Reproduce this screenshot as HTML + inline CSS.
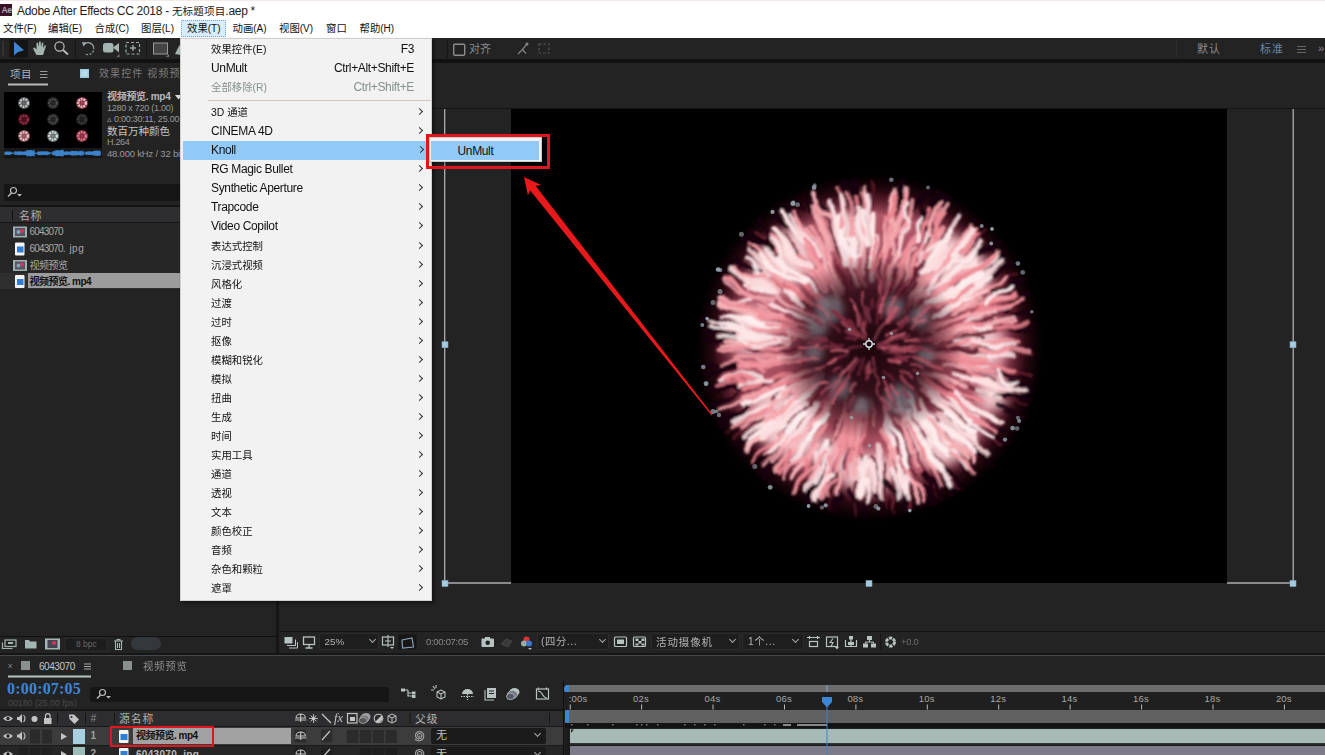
<!DOCTYPE html><html><head><meta charset="utf-8"><title>AE</title><style>
*{box-sizing:border-box;margin:0;padding:0}
html,body{width:1325px;height:755px;overflow:hidden}
body{background:#232323;font-family:"Liberation Sans","Noto Sans CJK SC",sans-serif;font-size:11px;position:relative;color:#9a9a9a}
.a{position:absolute}
.t{position:absolute;white-space:nowrap;line-height:1}
svg{position:absolute;overflow:visible}
.mi{position:absolute;left:0;width:250px;height:19px;color:#111;font-size:12px;letter-spacing:-.35px}
.mi span{position:absolute;top:2.5px;white-space:nowrap;line-height:13px}
.mi .l{left:30px}
.mi.k .l{font-size:10.4px;letter-spacing:0;top:3px}
.mi.h .l{left:28px}
.mi.h i{right:7px}
.mi .r{right:17px}
.mi i{position:absolute;right:9px;top:6px;width:5px;height:5px;border-top:1px solid #333;border-right:1px solid #333;transform:rotate(45deg) }
.mb{position:absolute;top:24px;font-size:10.4px;color:#111;white-space:nowrap;line-height:1}
.dd{position:absolute;height:17px;top:633px;background:#1e1e1e;border:1px solid #2c2c2c;border-radius:2px}
.cv{position:absolute;width:5px;height:5px;border-bottom:1.3px solid #aaa;border-right:1.3px solid #aaa;transform:rotate(45deg)}
.sw{position:absolute;width:9px;height:12px;background:#2a2a2a}
</style></head><body><div class="a" style="left:0;top:0;width:1325px;height:38px;background:#fff"></div>
<div class="a" style="left:0;top:0;width:1325px;height:1px;background:#f3e9e7"></div>
<div class="a" style="left:0;top:3.5px;width:12px;height:12px;background:#3a1226"></div>
<div class="t" style="left:1.6px;top:5.5px;font-size:8.5px;color:#b4a4b4;font-weight:bold;letter-spacing:-0.5px">Ae</div>
<div class="t" style="left:17px;top:4.5px;font-size:12px;letter-spacing:-.3px;color:#222">Adobe After Effects CC 2018 - <span style="font-size:10.6px;letter-spacing:.1px">无标题项目</span>.aep *</div>
<div class="a" style="left:180.7px;top:20px;width:45.3px;height:17px;background:#d9ecfb;border:1px dotted #6aa7dc"></div>
<div class="mb" style="left:3px">文件<span style="font-size:10px">(F)</span></div>
<div class="mb" style="left:48px">编辑<span style="font-size:10px">(E)</span></div>
<div class="mb" style="left:94.5px">合成<span style="font-size:10px">(C)</span></div>
<div class="mb" style="left:141px">图层<span style="font-size:10px">(L)</span></div>
<div class="mb" style="left:187px">效果<span style="font-size:10px">(T)</span></div>
<div class="mb" style="left:232.5px">动画<span style="font-size:10px">(A)</span></div>
<div class="mb" style="left:279px">视图<span style="font-size:10px">(V)</span></div>
<div class="mb" style="left:326px">窗口</div>
<div class="mb" style="left:359.5px">帮助<span style="font-size:10px">(H)</span></div>
<div class="a" style="left:0;top:38px;width:1325px;height:21px;background:#232323"></div>
<div class="a" style="left:0;top:58.8px;width:1325px;height:3.8px;background:#121212"></div>
<svg style="left:0;top:0" width="1325" height="62"><rect x="9.5" y="40" width="18.5" height="17.5" fill="#141414"/><rect x="2" y="41" width="2" height="15" fill="#333"/><polygon points="14,41.5 14,55.5 17.6,52.2 24,50.3" fill="#3d85d0"/><path d="M36.5,55 L34,50.5 L33,48 L34.5,47.5 L36.5,49.5 L36.5,43 L38,42.5 L38.6,47 L39.2,41.5 L40.7,41.5 L41,47 L42,42.5 L43.4,42.8 L43,48 L45,45 L46,45.8 L44,52 L43,55 Z" fill="#a3b5b1"/><circle cx="59.5" cy="46.5" r="4.6" fill="none" stroke="#bdbdbd" stroke-width="1.2"/><line x1="63" y1="50" x2="68" y2="54.5" stroke="#bdbdbd" stroke-width="1.8"/><rect x="75" y="40" width="1" height="18" fill="#161616"/><path d="M84,44 A6,6 0 1 1 84.5,53.5" fill="none" stroke="#9aa" stroke-width="1.2" stroke-dasharray="14 1.5 2 1.5 2 1.5 2 1.5 2 20"/><polygon points="82,42 87,42.5 83.5,46.5" fill="#9aa"/><rect x="103" y="43" width="10.5" height="9.5" rx="2.5" fill="#a3b5b1"/><polygon points="113,47.5 119,43 119,52.5" fill="#a3b5b1"/><polygon points="119.5,54 119.5,57 116.5,57" fill="#777"/><rect x="126" y="42.5" width="13.5" height="11.5" fill="none" stroke="#9aa" stroke-width="1.2" stroke-dasharray="3 2"/><path d="M130,48h6M133,45v6" stroke="#9aa" stroke-width="1.4"/><rect x="146" y="40" width="1" height="18" fill="#161616"/><rect x="153.5" y="43" width="14" height="11" fill="#444" stroke="#999" stroke-width="1"/><polygon points="169,54 169,57 166,57" fill="#777"/><polygon points="175,54 179,46 181,44 181,55" fill="#a3b5b1"/><rect x="447" y="40" width="1" height="18" fill="#161616"/><rect x="453.7" y="44.2" width="11" height="11" rx="1" fill="none" stroke="#8c8c8c" stroke-width="1.4"/><path d="M518,54 L522.5,49.5 L526,53.5 M522.5,49.5 L527,44" fill="none" stroke="#808080" stroke-width="1.2"/><circle cx="527" cy="44" r="1.5" fill="#888"/><rect x="539" y="44" width="10" height="9" fill="none" stroke="#555" stroke-width="1.2" stroke-dasharray="2.5 2"/><path d="M1297,46.5h9M1297,49.5h9M1297,52.5h9" stroke="#666" stroke-width="1"/><rect x="1176" y="39" width="1" height="19" fill="#2b2b2b"/></svg>
<div class="t" style="left:469px;top:44px;font-size:11px;color:#8a8a8a">对齐</div>
<div class="t" style="left:1197px;top:44px;font-size:11px;color:#8c8c8c;letter-spacing:1px">默认</div>
<div class="t" style="left:1260px;top:44px;font-size:11px;color:#6585a8;letter-spacing:1px">标准</div>
<div class="t" style="left:1318px;top:43px;font-size:11px;color:#888">»</div>
<div class="a" style="left:276.3px;top:62px;width:2.6px;height:593px;background:#151515"></div>
<div class="t" style="left:10px;top:69px;font-size:10.5px;color:#b4b4b4;letter-spacing:.6px">项目</div>
<svg style="left:0;top:0" width="280" height="100"><path d="M40,71.5h7.5M40,74.5h7.5M40,77.5h7.5" stroke="#9a9a9a" stroke-width="1"/><rect x="8" y="83.5" width="40" height="2" fill="#b9b9b9"/><rect x="80" y="69" width="9" height="9" fill="#9ecbe0"/><rect x="81.5" y="70.5" width="6" height="6" fill="#b9dcea"/></svg>
<div class="t" style="left:99px;top:69px;font-size:10px;color:#7d7d7d;letter-spacing:1.1px">效果控件 视频预览.mp4</div>
<svg style="left:0;top:0" width="280" height="170"><rect x="4" y="92" width="98" height="65.5" fill="#000"/><circle cx="24" cy="103.0" r="6" fill="#6a6e70" opacity=".8"/><circle cx="24" cy="103.0" r="3.8" fill="none" stroke="#c4c8c8" stroke-width="2.4" stroke-dasharray="1.8 .9"/><circle cx="24" cy="103.0" r="1.2" fill="#6a6e70"/><circle cx="53" cy="103.0" r="6" fill="#2a2a2c" opacity=".8"/><circle cx="53" cy="103.0" r="3.8" fill="none" stroke="#4c4c4e" stroke-width="2.4" stroke-dasharray="1.8 .9"/><circle cx="53" cy="103.0" r="1.2" fill="#2a2a2c"/><circle cx="82" cy="103.0" r="6" fill="#a8485c" opacity=".8"/><circle cx="82" cy="103.0" r="3.8" fill="none" stroke="#f4c4c8" stroke-width="2.4" stroke-dasharray="1.8 .9"/><circle cx="82" cy="103.0" r="1.2" fill="#a8485c"/><circle cx="24" cy="119.5" r="6" fill="#54121f" opacity=".8"/><circle cx="24" cy="119.5" r="3.8" fill="none" stroke="#8e2e4c" stroke-width="2.4" stroke-dasharray="1.8 .9"/><circle cx="24" cy="119.5" r="1.2" fill="#54121f"/><circle cx="53" cy="119.5" r="6" fill="#28282a" opacity=".8"/><circle cx="53" cy="119.5" r="3.8" fill="none" stroke="#48484a" stroke-width="2.4" stroke-dasharray="1.8 .9"/><circle cx="53" cy="119.5" r="1.2" fill="#28282a"/><circle cx="82" cy="119.5" r="6" fill="#222224" opacity=".8"/><circle cx="82" cy="119.5" r="3.8" fill="none" stroke="#3c3c3e" stroke-width="2.4" stroke-dasharray="1.8 .9"/><circle cx="82" cy="119.5" r="1.2" fill="#222224"/><circle cx="24" cy="136.0" r="6" fill="#a4666e" opacity=".8"/><circle cx="24" cy="136.0" r="3.8" fill="none" stroke="#ecc6ca" stroke-width="2.4" stroke-dasharray="1.8 .9"/><circle cx="24" cy="136.0" r="1.2" fill="#a4666e"/><circle cx="53" cy="136.0" r="6" fill="#80888a" opacity=".8"/><circle cx="53" cy="136.0" r="3.8" fill="none" stroke="#d0dcd8" stroke-width="2.4" stroke-dasharray="1.8 .9"/><circle cx="53" cy="136.0" r="1.2" fill="#80888a"/><circle cx="82" cy="136.0" r="6" fill="#a23850" opacity=".8"/><circle cx="82" cy="136.0" r="3.8" fill="none" stroke="#e07e8c" stroke-width="2.4" stroke-dasharray="1.8 .9"/><circle cx="82" cy="136.0" r="1.2" fill="#a23850"/><rect x="4" y="148" width="98" height="9.5" fill="#171717"/><path d="M5,151.7v3.1M6,151.5v3.5M7,151.6v3.2M8,151.4v3.5M9,151.4v3.6M10,151.8v2.9M11,151.8v2.8M15,151.3v3.8M16,151.6v3.1M17,151.7v3.1M18,151.2v4.0M19,151.5v3.4M20,151.3v3.8M21,151.5v3.4M22,151.4v3.6M23,151.7v3.0M24,151.4v3.6M25,151.3v3.8M26,151.5v3.4M27,150.0v6.5M28,150.0v6.3M29,150.7v5.0M30,150.0v6.5M31,150.1v6.1M32,150.4v5.5M33,150.7v5.0M34,149.8v6.7M38,151.5v3.4M39,151.4v3.7M40,151.3v3.9M41,151.4v3.7M42,151.2v3.9M43,151.6v3.3M44,151.3v3.8M45,151.5v3.3M46,151.2v3.9M47,151.3v3.9M48,151.7v2.9M49,151.7v3.0M53,151.5v3.4M54,151.0v4.5M55,151.3v3.7M56,150.1v6.2M57,150.4v5.5M58,150.2v6.0M59,150.3v5.7M60,150.4v5.6M61,150.1v6.1M62,150.1v6.1M63,149.8v6.8M64,151.5v3.4M65,151.4v3.7M66,151.4v3.6M67,151.3v3.7M68,151.5v3.4M69,151.8v2.8M70,151.4v3.6M71,151.3v3.7M72,150.8v4.9M73,151.0v4.4M74,150.9v4.6M75,151.3v3.8M76,150.8v4.7M77,151.0v4.4M78,151.2v3.9M79,151.4v3.6M80,150.8v4.8M81,150.7v5.0M82,151.4v3.6M83,150.8v4.7M86,151.6v3.3M87,151.7v3.0M88,151.6v3.2M89,151.3v3.7M90,151.3v3.8M91,151.8v2.9M92,151.4v3.5M93,151.2v3.9M94,150.7v5.0M95,151.0v4.4M96,150.5v5.3M97,150.5v5.5M98,150.9v4.7M99,150.5v5.5M100,151.0v4.4M5,153.2h96" stroke="#3b82cc" stroke-width="1.25"/></svg>
<div class="t" style="left:107px;top:92px;font-size:10px;font-weight:bold;color:#b8b8b8;letter-spacing:-.3px">视频预览.&nbsp;mp4</div>
<svg style="left:0;top:0" width="200" height="110"><polygon points="175,95 182,95 178.5,99.5" fill="#ddd"/></svg>
<div class="t" style="left:107px;top:103.5px;font-size:9px;color:#999;letter-spacing:-.25px">1280 x 720 (1.00)</div>
<div class="t" style="left:107px;top:114.5px;font-size:9px;color:#999;letter-spacing:-.25px">▵ 0:00:30:11, 25.00 fps</div>
<div class="t" style="left:107px;top:126px;font-size:10.5px;color:#c4c4c4">数百万种颜色</div>
<div class="t" style="left:107px;top:138px;font-size:9px;color:#999;letter-spacing:-.3px">H.264</div>
<div class="t" style="left:107px;top:149px;font-size:9.5px;color:#999;letter-spacing:-.2px">48.000 kHz / 32 bit U / 立体声</div>
<div class="a" style="left:4px;top:184px;width:272px;height:17px;background:#161616;border-radius:2px"></div>
<svg style="left:0;top:0" width="40" height="210"><circle cx="13.5" cy="190.5" r="3" fill="none" stroke="#bbb" stroke-width="1.2"/><line x1="11.5" y1="193" x2="8" y2="196.5" stroke="#bbb" stroke-width="1.4"/><polygon points="17,194 22,194 19.5,196.5" fill="#bbb"/></svg>
<div class="a" style="left:0;top:205px;width:277px;height:2px;background:#141414"></div>
<div class="a" style="left:0;top:207px;width:277px;height:15px;background:#2e2e30"></div>
<div class="a" style="left:12px;top:210px;width:1px;height:10px;background:#111"></div>
<div class="t" style="left:19px;top:210.5px;font-size:11px;color:#b0b0b0;letter-spacing:.5px">名称</div>
<div class="a" style="left:0;top:222px;width:277px;height:1px;background:#161616"></div>
<div class="a" style="left:0;top:223px;width:277px;height:50px;background:#262626"></div>
<div class="a" style="left:0;top:273px;width:277px;height:16px;background:#2f2f2f"></div>
<div class="a" style="left:28px;top:273px;width:249px;height:15px;background:#9c9c9c"></div>
<div class="t" style="left:29.5px;top:227px;font-size:10px;color:#a8a8a8;letter-spacing:-.5px"><span style="letter-spacing:-.8px">6043070</span></div>
<div class="t" style="left:29.5px;top:244px;font-size:10px;color:#a8a8a8;letter-spacing:-.5px"><span style="letter-spacing:-.8px">6043070</span><span style="letter-spacing:.5px">.&nbsp;jpg</span></div>
<div class="t" style="left:29.5px;top:260.5px;font-size:10px;color:#a8a8a8;letter-spacing:-.5px">视频预览</div>
<div class="t" style="left:29.5px;top:276.5px;font-size:10px;font-weight:bold;color:#111;letter-spacing:-.5px">视频预览.&nbsp;mp4</div>
<svg style="left:0;top:0" width="40" height="300"><rect x="13" y="226.5" width="14" height="11" fill="#9fb0ad"/><rect x="15" y="228" width="10" height="8" fill="#556"/><circle cx="18.5" cy="232" r="2" fill="#7ab"/><circle cx="22" cy="231" r="2" fill="#d35"/><rect x="15" y="242.5" width="9.5" height="13" rx="1" fill="#f4f4f4"/><rect x="17" y="246.5" width="6.5" height="6" fill="#2f7fd6"/><rect x="13" y="260.0" width="14" height="11" fill="#9fb0ad"/><rect x="15" y="261.5" width="10" height="8" fill="#556"/><circle cx="18.5" cy="265.5" r="2" fill="#7ab"/><circle cx="22" cy="264.5" r="2" fill="#d35"/><rect x="15" y="275.0" width="9.5" height="13" rx="1" fill="#f4f4f4"/><rect x="17" y="279.0" width="6.5" height="6" fill="#2f7fd6"/></svg>
<div class="a" style="left:0;top:636px;width:277px;height:1px;background:#111"></div>
<svg style="left:0;top:0" width="280" height="660"><rect x="5" y="640" width="11" height="6.5" fill="none" stroke="#a3b5b1" stroke-width="1.2"/><path d="M2.5,642.5v6h10" fill="none" stroke="#a3b5b1" stroke-width="1.2"/><rect x="8" y="642" width="5" height="2" fill="#a3b5b1"/><path d="M25,640h4l1,1.5h6.5v7H25z" fill="#a3b5b1"/><rect x="45" y="638.5" width="15" height="11" fill="#a3b5b1"/><rect x="47.5" y="640" width="10" height="8" fill="#445"/><circle cx="54" cy="643" r="2" fill="#d35"/><rect x="65" y="638" width="42" height="13" fill="#1d1d1d" stroke="#2c2c2c"/><path d="M114,641h9M115.5,641v8.5h6v-8.5M117.5,643v5M119.5,643v5M117,641v-1.5h3v1.5" fill="none" stroke="#a3b5b1" stroke-width="1.1"/><rect x="131" y="637" width="30" height="13" rx="6.5" fill="#34383c"/></svg>
<div class="t" style="left:76px;top:640px;font-size:8.5px;color:#6a6a6a">8 bpc</div>
<div class="a" style="left:280px;top:108px;width:1045px;height:1px;background:#151515"></div>
<div class="a" style="left:511px;top:109px;width:716px;height:474px;background:#000"></div>
<svg style="left:0;top:0" width="1325" height="640"><defs><radialGradient id="fh" cx="50%" cy="50%" r="50%"><stop offset="0" stop-color="#501222" stop-opacity=".9"/><stop offset=".88" stop-color="#4a1020" stop-opacity=".7"/><stop offset="1" stop-color="#300612" stop-opacity="0"/></radialGradient><radialGradient id="fg" cx="50%" cy="50%" r="50%"><stop offset="0" stop-color="#3a0f1a"/><stop offset=".5" stop-color="#a04a5a"/><stop offset=".85" stop-color="#b05868"/><stop offset="1" stop-color="#7a2c3c" stop-opacity="0"/></radialGradient><radialGradient id="fc" cx="50%" cy="50%" r="50%"><stop offset="0" stop-color="#1c060c" stop-opacity=".95"/><stop offset=".62" stop-color="#2a0a14" stop-opacity=".82"/><stop offset="1" stop-color="#2a0a14" stop-opacity="0"/></radialGradient><filter id="fb" x="-5%" y="-5%" width="110%" height="110%"><feTurbulence type="fractalNoise" baseFrequency="0.04" numOctaves="2" seed="4" result="n"/><feDisplacementMap in="SourceGraphic" in2="n" scale="10" xChannelSelector="R" yChannelSelector="G"/><feGaussianBlur stdDeviation="1.3"/></filter><filter id="fb3" x="-5%" y="-5%" width="110%" height="110%"><feGaussianBlur stdDeviation=".6"/></filter><filter id="fb4" x="-5%" y="-5%" width="110%" height="110%"><feGaussianBlur stdDeviation="3.5"/></filter><filter id="fb5" x="-5%" y="-5%" width="110%" height="110%"><feGaussianBlur stdDeviation="6"/></filter><clipPath id="fclip"><circle cx="869.5" cy="347.5" r="146"/></clipPath></defs><circle cx="869.5" cy="347.5" r="174" fill="url(#fh)"/><circle cx="869.5" cy="347.5" r="156" fill="url(#fg)"/><g filter="url(#fb5)"><g clip-path="url(#fclip)"><ellipse cx="783.2" cy="261.2" rx="25.2" ry="37.5" transform="rotate(-135 783.2 261.2)" fill="#ffe4e4" opacity=".8"/><ellipse cx="784.8" cy="423.8" rx="27.0" ry="38.2" transform="rotate(-222 784.8 423.8)" fill="#ffe4e4" opacity=".8"/><ellipse cx="958.7" cy="267.2" rx="25.2" ry="36.9" transform="rotate(-42 958.7 267.2)" fill="#ffe4e4" opacity=".8"/><ellipse cx="945.6" cy="435.0" rx="27.0" ry="35.6" transform="rotate(49 945.6 435.0)" fill="#ffe4e4" opacity=".8"/><ellipse cx="750.7" cy="330.8" rx="21.6" ry="23.5" transform="rotate(-172 750.7 330.8)" fill="#ffe4e4" opacity=".8"/><ellipse cx="869.5" cy="473.5" rx="19.8" ry="28.1" transform="rotate(90 869.5 473.5)" fill="#ffe4e4" opacity=".8"/><ellipse cx="981.5" cy="347.5" rx="23.4" ry="21.9" transform="rotate(0 981.5 347.5)" fill="#ffe4e4" opacity=".8"/><ellipse cx="849.4" cy="233.3" rx="19.8" ry="19.4" transform="rotate(-100 849.4 233.3)" fill="#ffe4e4" opacity=".8"/><ellipse cx="993.5" cy="392.6" rx="16.2" ry="18.4" transform="rotate(20 993.5 392.6)" fill="#ffe4e4" opacity=".8"/><ellipse cx="829.8" cy="456.5" rx="18.0" ry="16.2" transform="rotate(-250 829.8 456.5)" fill="#ffe4e4" opacity=".8"/></g></g><g fill="none" stroke-linecap="round" filter="url(#fb)"><path d="M927.4,249.7Q931.2,227.7 944.1,210.7" stroke="#5b192a" stroke-width="3.0" opacity="0.80"/><path d="M904.5,439.6Q908.4,458.3 916.0,475.6" stroke="#541626" stroke-width="2.5" opacity="0.80"/><path d="M817.2,378.6Q793.0,384.0 773.2,397.8" stroke="#5c1a2a" stroke-width="2.5" opacity="0.80"/><path d="M987.3,349.3Q1011.2,354.5 1035.4,353.5" stroke="#551626" stroke-width="3.2" opacity="0.80"/><path d="M804.7,346.5Q778.1,351.9 751.4,350.2" stroke="#591829" stroke-width="2.7" opacity="0.80"/><path d="M964.2,252.9Q975.9,241.9 987.2,230.4" stroke="#601c2c" stroke-width="3.1" opacity="0.80"/><path d="M892.0,293.9Q906.1,272.7 914.9,249.0" stroke="#702435" stroke-width="2.5" opacity="0.80"/><path d="M998.0,373.0Q1016.3,369.7 1033.1,375.4" stroke="#682031" stroke-width="3.5" opacity="0.80"/><path d="M938.1,281.1Q948.9,257.6 968.5,242.3" stroke="#752638" stroke-width="2.4" opacity="0.80"/><path d="M797.0,301.2Q783.2,289.6 767.7,280.6" stroke="#772739" stroke-width="2.8" opacity="0.80"/><path d="M931.5,336.9Q953.8,333.3 976.0,329.5" stroke="#651e2f" stroke-width="4.0" opacity="0.80"/><path d="M756.8,384.5Q744.7,391.9 731.1,395.1" stroke="#682031" stroke-width="3.2" opacity="0.80"/><path d="M898.8,284.5Q904.1,269.2 911.3,254.9" stroke="#601c2c" stroke-width="3.9" opacity="0.80"/><path d="M847.3,287.7Q845.2,276.6 840.7,266.4" stroke="#6f2335" stroke-width="3.6" opacity="0.80"/><path d="M823.8,450.2Q825.9,478.6 811.7,500.9" stroke="#621d2e" stroke-width="3.9" opacity="0.80"/><path d="M971.6,372.7Q994.6,385.2 1019.8,389.5" stroke="#611c2d" stroke-width="3.0" opacity="0.80"/><path d="M918.5,395.8Q926.3,403.9 934.3,411.7" stroke="#6f2335" stroke-width="3.6" opacity="0.80"/><path d="M900.4,398.3Q903.7,413.1 912.5,424.8" stroke="#631d2e" stroke-width="2.6" opacity="0.80"/><path d="M945.4,312.1Q968.9,301.6 992.2,290.7" stroke="#6e2334" stroke-width="4.0" opacity="0.80"/><path d="M867.6,211.0Q876.1,196.4 872.9,181.5" stroke="#551626" stroke-width="3.5" opacity="0.80"/><path d="M934.1,451.7Q947.5,468.9 958.3,487.8" stroke="#631d2e" stroke-width="3.2" opacity="0.80"/><path d="M916.9,413.4Q920.0,434.4 933.7,448.7" stroke="#6f2335" stroke-width="2.6" opacity="0.80"/><path d="M815.7,472.5Q821.2,485.8 813.6,494.1" stroke="#6b2132" stroke-width="3.2" opacity="0.80"/><path d="M803.2,386.4Q785.2,388.9 771.3,399.4" stroke="#742638" stroke-width="3.9" opacity="0.80"/><path d="M921.6,312.1Q927.1,301.9 936.8,297.4" stroke="#591828" stroke-width="2.9" opacity="0.80"/><path d="M832.7,402.0Q817.9,415.3 808.0,432.1" stroke="#651e2f" stroke-width="2.6" opacity="0.80"/><path d="M905.0,286.5Q920.1,276.4 926.6,260.7" stroke="#671f31" stroke-width="3.4" opacity="0.80"/><path d="M838.0,472.9Q832.5,490.4 828.4,508.3" stroke="#541626" stroke-width="3.6" opacity="0.80"/><path d="M980.0,300.9Q989.9,291.1 1002.7,287.6" stroke="#5d1a2b" stroke-width="3.4" opacity="0.80"/><path d="M846.7,293.6Q843.0,276.9 835.7,261.7" stroke="#742638" stroke-width="2.6" opacity="0.80"/><path d="M767.8,349.5Q741.2,350.2 714.7,350.7" stroke="#692032" stroke-width="2.2" opacity="0.80"/><path d="M856.2,484.1Q856.7,498.6 854.6,512.8" stroke="#661f30" stroke-width="3.4" opacity="0.80"/><path d="M983.9,299.1Q996.9,278.0 1018.3,273.9" stroke="#5f1b2c" stroke-width="2.7" opacity="0.80"/><path d="M917.4,309.0Q926.7,302.6 935.4,295.3" stroke="#6f2335" stroke-width="3.6" opacity="0.80"/><path d="M828.5,386.7Q812.0,400.1 796.8,415.1" stroke="#661f30" stroke-width="2.9" opacity="0.80"/><path d="M809.1,304.5Q798.3,301.1 790.1,293.8" stroke="#5c1a2a" stroke-width="2.9" opacity="0.80"/><path d="M917.3,453.8Q924.4,470.3 931.8,486.6" stroke="#611c2d" stroke-width="2.5" opacity="0.80"/><path d="M777.0,448.3Q774.0,461.1 764.5,468.1" stroke="#651e2f" stroke-width="3.0" opacity="0.80"/><path d="M963.2,424.5Q985.6,429.7 999.9,445.6" stroke="#6c2233" stroke-width="3.5" opacity="0.80"/><path d="M833.9,454.8Q832.2,469.3 826.8,482.5" stroke="#611c2d" stroke-width="3.8" opacity="0.80"/><path d="M931.5,469.6Q933.0,485.0 941.3,497.1" stroke="#5f1b2c" stroke-width="2.0" opacity="0.80"/><path d="M817.3,305.0Q797.4,298.7 783.3,284.6" stroke="#5e1b2c" stroke-width="2.2" opacity="0.80"/><path d="M865.0,441.7Q858.2,453.1 859.7,465.2" stroke="#6d2234" stroke-width="3.9" opacity="0.80"/><path d="M813.6,253.3Q806.4,232.2 794.0,214.0" stroke="#762739" stroke-width="2.5" opacity="0.80"/><path d="M866.1,220.7Q863.1,208.1 863.7,195.4" stroke="#5b1929" stroke-width="3.4" opacity="0.80"/><path d="M854.6,261.6Q847.4,236.0 843.5,209.8" stroke="#631d2e" stroke-width="2.9" opacity="0.80"/><path d="M856.1,279.0Q845.2,264.4 844.2,247.4" stroke="#5a1929" stroke-width="2.5" opacity="0.80"/><path d="M990.5,320.9Q1011.1,316.4 1031.6,311.9" stroke="#541626" stroke-width="3.4" opacity="0.80"/><path d="M972.9,321.4Q994.2,314.9 1015.9,309.8" stroke="#541626" stroke-width="2.5" opacity="0.80"/><path d="M936.8,302.0Q955.6,298.1 969.4,286.3" stroke="#611c2d" stroke-width="3.8" opacity="0.80"/><path d="M901.9,468.1Q904.1,487.4 910.0,505.8" stroke="#5a1929" stroke-width="2.1" opacity="0.80"/><path d="M799.3,371.2Q779.2,386.0 755.6,391.9" stroke="#752638" stroke-width="3.7" opacity="0.80"/><path d="M973.3,336.0Q983.9,328.8 995.5,329.5" stroke="#6e2334" stroke-width="3.8" opacity="0.80"/><path d="M892.2,291.9Q901.8,269.6 910.9,247.1" stroke="#6a2132" stroke-width="3.2" opacity="0.80"/><path d="M895.4,427.1Q902.4,440.3 906.2,454.6" stroke="#5e1b2b" stroke-width="2.7" opacity="0.80"/><path d="M916.6,386.4Q922.2,396.8 931.8,403.0" stroke="#6c2233" stroke-width="3.0" opacity="0.80"/><path d="M862.0,288.0Q858.6,277.7 857.9,267.0" stroke="#6c2233" stroke-width="3.0" opacity="0.80"/><path d="M904.3,294.0Q915.7,270.1 930.8,248.5" stroke="#621d2e" stroke-width="3.1" opacity="0.80"/><path d="M855.7,446.1Q844.1,455.5 845.9,467.5" stroke="#5b192a" stroke-width="3.7" opacity="0.80"/><path d="M809.4,267.2Q797.0,250.3 784.3,233.6" stroke="#6d2234" stroke-width="2.3" opacity="0.80"/><path d="M936.4,239.1Q953.4,227.2 961.4,209.3" stroke="#6c2233" stroke-width="3.8" opacity="0.80"/><path d="M892.3,477.2Q892.0,494.7 896.1,511.4" stroke="#762739" stroke-width="3.8" opacity="0.80"/><path d="M995.2,395.6Q1011.1,398.0 1025.3,404.7" stroke="#601c2d" stroke-width="2.0" opacity="0.80"/><path d="M776.3,421.9Q760.3,436.0 743.4,449.0" stroke="#752638" stroke-width="2.3" opacity="0.80"/><path d="M922.9,396.6Q946.3,411.6 965.8,431.1" stroke="#6f2335" stroke-width="3.1" opacity="0.80"/><path d="M933.1,405.1Q942.1,412.2 950.4,420.1" stroke="#5a1929" stroke-width="2.8" opacity="0.80"/><path d="M903.6,426.2Q909.9,436.9 914.3,448.4" stroke="#631d2e" stroke-width="2.1" opacity="0.80"/><path d="M979.5,329.2Q993.0,326.3 1006.5,324.3" stroke="#752638" stroke-width="2.2" opacity="0.80"/><path d="M947.5,407.9Q959.0,412.9 968.0,421.2" stroke="#631d2e" stroke-width="2.5" opacity="0.80"/><path d="M885.0,465.3Q884.4,487.0 888.3,508.0" stroke="#631d2e" stroke-width="2.5" opacity="0.80"/><path d="M792.1,342.4Q772.5,347.4 753.2,344.4" stroke="#551626" stroke-width="2.9" opacity="0.80"/><path d="M764.0,411.2Q743.9,419.2 726.1,431.2" stroke="#772739" stroke-width="3.5" opacity="0.80"/><path d="M826.1,313.2Q804.7,306.0 788.6,291.1" stroke="#682031" stroke-width="3.2" opacity="0.80"/><path d="M893.8,277.3Q909.3,258.9 914.8,236.4" stroke="#651e2f" stroke-width="3.6" opacity="0.80"/><path d="M783.5,256.4Q768.0,245.4 756.0,230.9" stroke="#621d2d" stroke-width="2.9" opacity="0.80"/><path d="M776.7,413.6Q752.4,422.4 733.0,438.7" stroke="#611c2d" stroke-width="3.5" opacity="0.80"/><path d="M893.9,467.4Q909.1,486.1 910.1,508.5" stroke="#722536" stroke-width="2.4" opacity="0.80"/><path d="M941.3,309.6Q962.1,304.1 980.2,293.1" stroke="#712436" stroke-width="2.3" opacity="0.80"/><path d="M836.5,420.5Q834.4,434.7 827.6,446.8" stroke="#651e2f" stroke-width="2.4" opacity="0.80"/><path d="M892.2,236.5Q903.1,222.7 903.8,206.5" stroke="#611c2d" stroke-width="3.3" opacity="0.80"/><path d="M907.4,301.1Q916.4,280.1 931.7,263.8" stroke="#581828" stroke-width="2.8" opacity="0.80"/><path d="M837.5,394.4Q824.7,413.2 812.0,431.9" stroke="#631d2e" stroke-width="3.2" opacity="0.80"/><path d="M953.8,367.9Q973.6,376.1 994.3,380.2" stroke="#611c2d" stroke-width="3.3" opacity="0.80"/><path d="M872.9,456.5Q880.8,474.0 879.1,492.2" stroke="#5c1a2a" stroke-width="3.0" opacity="0.80"/><path d="M978.3,333.8Q995.9,329.5 1013.8,327.9" stroke="#692031" stroke-width="2.4" opacity="0.80"/><path d="M952.1,297.4Q965.1,293.9 975.5,286.2" stroke="#5f1b2c" stroke-width="3.6" opacity="0.80"/><path d="M882.2,289.8Q880.2,275.9 884.5,263.2" stroke="#6a2132" stroke-width="2.3" opacity="0.80"/><path d="M881.2,284.1Q880.4,264.4 885.0,245.5" stroke="#621d2e" stroke-width="2.2" opacity="0.80"/><path d="M902.7,238.0Q905.8,218.6 912.2,200.2" stroke="#5c1a2a" stroke-width="2.2" opacity="0.80"/><path d="M929.0,306.4Q943.8,292.5 960.8,281.7" stroke="#661f30" stroke-width="3.6" opacity="0.80"/><path d="M950.1,342.9Q965.2,336.6 980.9,337.3" stroke="#601c2d" stroke-width="3.8" opacity="0.80"/><path d="M964.6,326.7Q991.0,328.9 1015.7,321.3" stroke="#682031" stroke-width="3.5" opacity="0.80"/><path d="M924.8,375.1Q949.0,386.7 973.0,398.8" stroke="#6d2234" stroke-width="3.6" opacity="0.80"/><path d="M912.7,275.5Q918.3,253.9 931.0,236.1" stroke="#621d2d" stroke-width="3.3" opacity="0.80"/><path d="M944.5,321.3Q953.8,313.2 965.3,310.8" stroke="#702435" stroke-width="2.6" opacity="0.80"/><path d="M917.5,282.0Q928.5,275.4 934.3,264.7" stroke="#631d2e" stroke-width="3.3" opacity="0.80"/><path d="M779.1,256.1Q767.4,243.2 754.9,231.0" stroke="#6a2132" stroke-width="3.4" opacity="0.80"/><path d="M788.9,377.3Q775.2,378.8 762.9,384.5" stroke="#5e1b2c" stroke-width="3.0" opacity="0.80"/><path d="M921.0,225.3Q935.2,213.4 939.2,196.8" stroke="#551626" stroke-width="2.4" opacity="0.80"/><path d="M926.2,409.0Q940.1,425.7 955.0,441.4" stroke="#6b2133" stroke-width="2.5" opacity="0.80"/><path d="M861.0,447.1Q867.3,464.0 863.4,480.4" stroke="#692031" stroke-width="2.6" opacity="0.80"/><path d="M835.1,436.9Q822.2,448.5 818.8,464.3" stroke="#722536" stroke-width="3.8" opacity="0.80"/><path d="M817.6,456.4Q801.8,472.8 794.4,493.6" stroke="#732537" stroke-width="3.9" opacity="0.80"/><path d="M952.3,349.2Q968.9,351.6 985.6,351.3" stroke="#5a1929" stroke-width="4.0" opacity="0.80"/><path d="M814.5,403.1Q807.5,416.6 796.2,426.2" stroke="#6a2132" stroke-width="3.6" opacity="0.80"/><path d="M901.5,472.6Q906.1,490.5 910.7,508.3" stroke="#772739" stroke-width="3.6" opacity="0.80"/><path d="M839.9,441.6Q835.8,468.5 826.7,494.0" stroke="#631d2e" stroke-width="3.3" opacity="0.80"/><path d="M851.1,284.1Q853.0,266.4 846.5,250.7" stroke="#541626" stroke-width="2.3" opacity="0.80"/><path d="M754.5,313.6Q744.0,310.8 733.7,307.6" stroke="#581828" stroke-width="3.3" opacity="0.80"/><path d="M843.1,258.4Q831.7,238.5 826.8,216.5" stroke="#621d2d" stroke-width="2.8" opacity="0.80"/><path d="M932.7,291.2Q952.7,280.3 968.4,264.4" stroke="#772739" stroke-width="3.7" opacity="0.80"/><path d="M811.9,405.3Q793.9,418.7 778.8,435.1" stroke="#581828" stroke-width="3.7" opacity="0.80"/><path d="M947.7,380.6Q969.3,383.2 988.1,393.1" stroke="#5e1b2b" stroke-width="3.6" opacity="0.80"/><path d="M953.4,345.6Q966.1,354.5 979.2,351.2" stroke="#5b192a" stroke-width="2.7" opacity="0.80"/><path d="M892.4,413.4Q904.7,430.1 909.8,449.7" stroke="#722536" stroke-width="3.1" opacity="0.80"/><path d="M819.4,395.5Q800.2,409.0 784.0,425.8" stroke="#752638" stroke-width="2.2" opacity="0.80"/><path d="M868.2,274.1Q863.5,257.4 864.5,240.3" stroke="#722537" stroke-width="3.6" opacity="0.80"/><path d="M859.7,422.6Q864.5,438.7 860.4,454.1" stroke="#631d2e" stroke-width="2.6" opacity="0.80"/><path d="M931.6,349.1Q958.5,346.3 985.4,347.8" stroke="#641e2f" stroke-width="3.8" opacity="0.80"/><path d="M884.7,416.7Q896.5,435.1 899.1,456.0" stroke="#732537" stroke-width="4.0" opacity="0.80"/><path d="M988.6,277.3Q994.6,259.2 1009.9,255.2" stroke="#1a060c" stroke-width="3.7" opacity="0.90"/><path d="M940.3,224.5Q938.5,208.7 947.9,198.9" stroke="#1a060c" stroke-width="2.8" opacity="0.90"/><path d="M843.2,498.5Q830.7,503.4 833.6,511.6" stroke="#1a060c" stroke-width="3.3" opacity="0.90"/><path d="M777.1,452.9Q778.8,472.0 765.8,479.6" stroke="#1a060c" stroke-width="2.7" opacity="0.90"/><path d="M1010.4,378.7Q1021.0,385.5 1032.9,386.6" stroke="#1a060c" stroke-width="3.9" opacity="0.90"/><path d="M755.4,437.4Q751.4,450.4 740.7,455.4" stroke="#1a060c" stroke-width="3.6" opacity="0.90"/><path d="M926.8,211.7Q938.7,205.8 939.9,195.0" stroke="#1a060c" stroke-width="4.4" opacity="0.90"/><path d="M991.1,291.4Q1007.7,286.7 1022.8,278.7" stroke="#1a060c" stroke-width="2.9" opacity="0.90"/><path d="M811.9,210.9Q807.0,202.3 803.6,193.0" stroke="#1a060c" stroke-width="3.4" opacity="0.90"/><path d="M975.6,252.7Q993.5,254.2 1000.3,242.0" stroke="#1a060c" stroke-width="2.6" opacity="0.90"/><path d="M913.5,205.5Q922.7,198.3 923.2,188.3" stroke="#1a060c" stroke-width="3.4" opacity="0.90"/><path d="M941.9,466.8Q956.3,474.4 961.3,488.2" stroke="#1a060c" stroke-width="3.7" opacity="0.90"/><path d="M811.8,482.8Q814.9,495.3 808.2,503.9" stroke="#1a060c" stroke-width="4.0" opacity="0.90"/><path d="M735.2,376.9Q723.7,392.8 707.5,391.8" stroke="#1a060c" stroke-width="4.1" opacity="0.90"/><path d="M857.2,208.8Q855.0,194.6 854.1,180.2" stroke="#1a060c" stroke-width="4.9" opacity="0.90"/><path d="M995.3,432.7Q997.6,443.3 1005.9,445.6" stroke="#1a060c" stroke-width="4.3" opacity="0.90"/><path d="M869.8,492.2Q861.9,503.7 864.7,515.4" stroke="#1a060c" stroke-width="3.8" opacity="0.90"/><path d="M863.5,212.7Q858.9,196.4 859.5,179.8" stroke="#1a060c" stroke-width="4.1" opacity="0.90"/><path d="M979.7,249.4Q993.4,249.8 998.9,240.4" stroke="#1a060c" stroke-width="4.9" opacity="0.90"/><path d="M734.7,380.1Q720.9,385.2 706.5,388.1" stroke="#1a060c" stroke-width="3.8" opacity="0.90"/><path d="M1003.9,373.0Q1018.8,378.0 1034.3,380.2" stroke="#1a060c" stroke-width="3.1" opacity="0.90"/><path d="M747.9,280.3Q738.8,267.0 724.8,262.1" stroke="#1a060c" stroke-width="4.2" opacity="0.90"/><path d="M818.3,482.7Q808.1,491.2 806.1,503.1" stroke="#1a060c" stroke-width="2.5" opacity="0.90"/><path d="M762.4,242.9Q745.5,248.2 742.6,237.4" stroke="#1a060c" stroke-width="4.2" opacity="0.90"/><path d="M996.9,406.0Q1009.4,412.0 1022.1,417.7" stroke="#1a060c" stroke-width="4.6" opacity="0.90"/><path d="M754.6,417.1Q738.1,422.2 724.4,432.1" stroke="#1a060c" stroke-width="2.6" opacity="0.90"/><path d="M766.5,243.3Q769.3,226.3 757.9,221.9" stroke="#1a060c" stroke-width="3.6" opacity="0.90"/><path d="M812.2,467.5Q796.2,478.9 791.4,496.2" stroke="#1a060c" stroke-width="3.1" opacity="0.90"/><path d="M800.3,229.9Q785.3,220.7 779.6,205.6" stroke="#1a060c" stroke-width="3.1" opacity="0.90"/><path d="M935.3,222.9Q936.8,208.5 944.8,197.3" stroke="#1a060c" stroke-width="4.3" opacity="0.90"/><path d="M984.2,280.2Q999.6,271.8 1014.6,262.8" stroke="#1a060c" stroke-width="4.6" opacity="0.90"/><path d="M958.8,456.3Q965.0,468.8 974.5,478.7" stroke="#1a060c" stroke-width="2.9" opacity="0.90"/><path d="M931.3,477.3Q927.0,492.4 935.6,501.9" stroke="#1a060c" stroke-width="2.6" opacity="0.90"/><path d="M924.6,217.6Q931.3,205.8 936.0,193.2" stroke="#1a060c" stroke-width="4.1" opacity="0.90"/><path d="M760.2,272.0Q742.9,266.3 729.4,254.9" stroke="#1a060c" stroke-width="3.4" opacity="0.90"/><path d="M909.7,210.6Q924.6,202.3 924.2,188.7" stroke="#1a060c" stroke-width="2.9" opacity="0.90"/><path d="M791.0,218.0Q782.6,213.5 779.8,205.5" stroke="#1a060c" stroke-width="3.5" opacity="0.90"/><path d="M739.5,389.0Q721.1,381.5 707.1,390.5" stroke="#1a060c" stroke-width="3.7" opacity="0.90"/><path d="M848.9,491.2Q862.1,503.9 855.2,514.9" stroke="#1a060c" stroke-width="4.4" opacity="0.90"/><path d="M722.7,370.0Q713.1,371.4 703.4,372.9" stroke="#1a060c" stroke-width="3.4" opacity="0.90"/><path d="M805.6,209.8Q797.7,204.6 795.9,196.5" stroke="#1a060c" stroke-width="3.5" opacity="0.90"/><path d="M924.8,473.1Q939.3,483.2 942.7,498.7" stroke="#1a060c" stroke-width="4.7" opacity="0.90"/><path d="M750.8,273.6Q734.3,274.0 723.8,263.8" stroke="#1a060c" stroke-width="2.6" opacity="0.90"/><path d="M830.8,490.5Q821.3,498.1 821.2,508.4" stroke="#1a060c" stroke-width="3.7" opacity="0.90"/><path d="M909.9,486.3Q925.8,493.3 924.6,506.2" stroke="#1a060c" stroke-width="4.5" opacity="0.90"/><path d="M894.7,490.9Q910.3,498.9 907.4,511.2" stroke="#1a060c" stroke-width="3.4" opacity="0.90"/><path d="M993.2,432.1Q1005.6,429.5 1011.4,437.5" stroke="#1a060c" stroke-width="3.4" opacity="0.90"/><path d="M875.5,495.2Q890.4,504.0 885.6,514.7" stroke="#1a060c" stroke-width="3.6" opacity="0.90"/><path d="M994.3,268.0Q995.4,252.1 1006.7,250.5" stroke="#1a060c" stroke-width="4.2" opacity="0.90"/><path d="M1005.2,394.6Q1020.9,384.4 1031.1,393.5" stroke="#1a060c" stroke-width="4.5" opacity="0.90"/><path d="M798.2,216.7Q785.9,212.9 784.1,202.8" stroke="#1a060c" stroke-width="3.1" opacity="0.90"/><path d="M960.3,238.4Q975.6,234.5 981.5,222.3" stroke="#1a060c" stroke-width="4.8" opacity="0.90"/><path d="M771.2,450.5Q762.7,460.1 753.7,469.2" stroke="#1a060c" stroke-width="4.9" opacity="0.90"/><path d="M735.6,339.8Q719.7,328.2 702.3,330.7" stroke="#1a060c" stroke-width="4.4" opacity="0.90"/><path d="M917.7,484.5Q934.9,489.8 933.9,502.7" stroke="#1a060c" stroke-width="4.9" opacity="0.90"/><path d="M724.8,341.3Q713.7,333.9 701.9,335.8" stroke="#1a060c" stroke-width="3.1" opacity="0.90"/><path d="M910.4,202.9Q926.4,198.9 923.9,188.5" stroke="#1a060c" stroke-width="4.3" opacity="0.90"/><path d="M754.9,429.4Q745.1,439.0 733.6,446.3" stroke="#1a060c" stroke-width="4.3" opacity="0.90"/><path d="M1002.1,412.7Q1012.3,414.8 1021.0,420.1" stroke="#1a060c" stroke-width="2.7" opacity="0.90"/><path d="M853.5,216.2Q845.7,199.3 845.4,181.2" stroke="#1a060c" stroke-width="4.8" opacity="0.90"/><path d="M944.1,476.1Q945.7,486.3 951.7,494.0" stroke="#1a060c" stroke-width="3.7" opacity="0.90"/><path d="M787.4,227.0Q777.2,220.6 772.4,210.4" stroke="#1a060c" stroke-width="3.7" opacity="0.90"/><path d="M1009.9,325.1Q1019.7,308.8 1033.7,311.7" stroke="#1a060c" stroke-width="2.8" opacity="0.90"/><path d="M735.9,392.6Q725.2,402.8 711.7,405.1" stroke="#1a060c" stroke-width="3.3" opacity="0.90"/><path d="M836.2,477.3Q825.3,491.9 823.3,509.0" stroke="#1a060c" stroke-width="4.0" opacity="0.90"/><path d="M763.8,458.0Q754.2,459.1 750.6,466.2" stroke="#1a060c" stroke-width="4.4" opacity="0.90"/><path d="M840.6,495.8Q828.7,501.7 830.9,511.0" stroke="#1a060c" stroke-width="4.0" opacity="0.90"/><path d="M1013.8,313.8Q1024.2,315.0 1033.6,311.5" stroke="#1a060c" stroke-width="4.6" opacity="0.90"/><path d="M734.3,367.0Q717.9,362.0 702.6,366.7" stroke="#1a060c" stroke-width="4.9" opacity="0.90"/><path d="M822.4,475.9Q812.7,488.9 808.8,504.1" stroke="#1a060c" stroke-width="4.5" opacity="0.90"/><path d="M734.5,325.6Q719.2,322.6 703.7,320.3" stroke="#1a060c" stroke-width="3.1" opacity="0.90"/><path d="M779.1,448.1Q772.0,463.6 759.7,474.7" stroke="#1a060c" stroke-width="3.1" opacity="0.90"/><path d="M900.4,200.2Q897.5,190.7 901.0,182.5" stroke="#1a060c" stroke-width="3.7" opacity="0.90"/><path d="M784.7,450.2Q774.3,464.2 763.0,477.4" stroke="#1a060c" stroke-width="2.9" opacity="0.90"/><path d="M722.4,328.9Q714.4,316.6 703.9,319.4" stroke="#1a060c" stroke-width="4.8" opacity="0.90"/><path d="M859.3,194.7Q853.8,187.7 855.2,180.1" stroke="#1a060c" stroke-width="4.1" opacity="0.90"/><path d="M891.5,215.6Q903.2,200.5 903.1,182.9" stroke="#1a060c" stroke-width="4.1" opacity="0.90"/><path d="M995.8,395.9Q1014.6,391.4 1028.8,400.8" stroke="#1a060c" stroke-width="3.3" opacity="0.90"/><path d="M969.5,240.6Q966.0,223.4 977.4,218.7" stroke="#1a060c" stroke-width="3.5" opacity="0.90"/><path d="M825.6,208.8Q812.8,201.4 812.7,189.4" stroke="#1a060c" stroke-width="3.0" opacity="0.90"/><path d="M924.4,223.8Q929.6,208.3 936.7,193.5" stroke="#1a060c" stroke-width="3.4" opacity="0.90"/><path d="M975.3,451.2Q985.3,455.0 991.4,463.1" stroke="#1a060c" stroke-width="3.8" opacity="0.90"/><path d="M741.4,415.5Q728.6,415.7 719.4,423.0" stroke="#1a060c" stroke-width="4.1" opacity="0.90"/><path d="M955.9,220.3Q957.9,213.1 962.6,207.7" stroke="#1a060c" stroke-width="4.0" opacity="0.90"/><path d="M915.7,490.8Q916.9,499.6 920.1,507.7" stroke="#1a060c" stroke-width="4.2" opacity="0.90"/><path d="M735.5,368.7Q719.2,369.3 703.4,372.5" stroke="#1a060c" stroke-width="3.8" opacity="0.90"/><path d="M777.6,467.0Q772.8,474.1 767.3,480.9" stroke="#1a060c" stroke-width="4.7" opacity="0.90"/><path d="M1007.9,309.8Q1015.1,292.3 1028.8,294.0" stroke="#1a060c" stroke-width="4.9" opacity="0.90"/><path d="M736.9,281.3Q731.2,270.9 721.2,268.6" stroke="#1a060c" stroke-width="4.8" opacity="0.90"/><path d="M1017.1,330.8Q1026.1,324.3 1036.0,325.1" stroke="#1a060c" stroke-width="3.7" opacity="0.90"/><path d="M1003.4,287.6Q1015.1,287.8 1024.1,281.8" stroke="#1a060c" stroke-width="4.3" opacity="0.90"/><path d="M931.8,224.0Q933.1,208.2 941.6,195.8" stroke="#1a060c" stroke-width="3.6" opacity="0.90"/><path d="M734.0,334.1Q717.4,346.9 701.6,340.5" stroke="#1a060c" stroke-width="3.8" opacity="0.90"/><path d="M922.8,474.9Q931.7,487.4 936.4,501.6" stroke="#1a060c" stroke-width="3.7" opacity="0.90"/><path d="M760.7,240.9Q748.4,242.7 745.2,234.5" stroke="#1a060c" stroke-width="4.7" opacity="0.90"/><path d="M883.9,481.8Q900.4,495.9 897.2,513.2" stroke="#1a060c" stroke-width="3.9" opacity="0.90"/><path d="M738.9,325.3Q722.1,318.8 704.3,317.0" stroke="#1a060c" stroke-width="2.7" opacity="0.90"/><path d="M746.9,406.3Q736.5,421.0 720.6,425.3" stroke="#1a060c" stroke-width="3.8" opacity="0.90"/><path d="M771.9,248.4Q759.6,240.3 750.2,229.2" stroke="#1a060c" stroke-width="4.5" opacity="0.90"/><path d="M1007.9,329.3Q1022.6,333.5 1036.5,329.5" stroke="#1a060c" stroke-width="2.5" opacity="0.90"/><path d="M929.2,240.1Q935.0,216.5 948.2,196.8" stroke="#1a050b" stroke-width="3.3" opacity="0.90"/><path d="M936.7,228.3Q933.3,208.0 945.4,195.4" stroke="#1a050b" stroke-width="4.4" opacity="0.90"/><path d="M931.7,237.2Q939.2,216.6 950.9,198.2" stroke="#1a050b" stroke-width="3.8" opacity="0.90"/><path d="M939.0,224.1Q935.1,206.2 945.9,195.6" stroke="#1a050b" stroke-width="3.2" opacity="0.90"/><path d="M925.2,233.7Q929.7,211.9 940.8,193.2" stroke="#1a050b" stroke-width="3.3" opacity="0.90"/><path d="M922.6,221.1Q919.0,202.2 928.7,188.2" stroke="#1a050b" stroke-width="4.6" opacity="0.90"/><path d="M917.5,229.0Q929.7,211.3 936.3,191.2" stroke="#1a050b" stroke-width="4.3" opacity="0.90"/><path d="M923.6,224.6Q927.2,206.8 935.6,190.9" stroke="#1a050b" stroke-width="4.2" opacity="0.90"/><path d="M987.4,355.4Q1000.0,354.7 1012.5,356.1" stroke="#fde4e5" stroke-width="5.3" opacity="0.85"/><path d="M795.4,324.5Q775.0,317.3 754.3,311.1" stroke="#ed8994" stroke-width="4.8" opacity="0.93"/><path d="M963.4,297.5Q987.0,290.5 1007.8,277.8" stroke="#f39fa7" stroke-width="3.0" opacity="0.97"/><path d="M754.4,333.2Q731.8,328.5 709.0,326.2" stroke="#feeeee" stroke-width="3.9" opacity="0.91"/><path d="M944.6,431.5Q952.9,453.0 969.4,467.8" stroke="#fde5e6" stroke-width="3.8" opacity="0.87"/><path d="M862.2,409.9Q852.8,434.9 851.2,461.1" stroke="#ed8893" stroke-width="3.8" opacity="0.91"/><path d="M950.9,359.6Q968.5,364.9 986.6,366.8" stroke="#fde1e2" stroke-width="5.6" opacity="0.81"/><path d="M794.0,400.6Q779.8,408.8 766.7,418.6" stroke="#fde2e3" stroke-width="4.6" opacity="0.95"/><path d="M777.4,293.2Q759.6,293.4 747.5,282.8" stroke="#fee9ea" stroke-width="4.8" opacity="0.93"/><path d="M907.3,477.1Q924.1,486.4 923.7,501.6" stroke="#f1969f" stroke-width="3.8" opacity="0.98"/><path d="M895.7,420.2Q908.3,429.0 910.2,442.4" stroke="#f5a9af" stroke-width="2.9" opacity="0.80"/><path d="M840.4,300.2Q835.4,281.6 824.4,266.3" stroke="#f39fa7" stroke-width="4.1" opacity="0.99"/><path d="M895.2,232.2Q888.0,211.6 895.7,193.6" stroke="#f4a4ab" stroke-width="4.9" opacity="0.99"/><path d="M932.0,356.0Q943.2,358.4 954.6,359.7" stroke="#f39fa7" stroke-width="3.8" opacity="0.99"/><path d="M915.3,295.7Q931.6,275.5 949.0,256.3" stroke="#fef1f1" stroke-width="4.4" opacity="0.95"/><path d="M928.0,420.0Q932.9,430.7 940.9,439.1" stroke="#f199a1" stroke-width="4.6" opacity="0.89"/><path d="M824.4,292.4Q811.1,278.4 799.2,263.2" stroke="#f6acb2" stroke-width="3.2" opacity="0.87"/><path d="M830.2,312.3Q813.1,293.5 793.9,277.0" stroke="#f9b8bd" stroke-width="3.4" opacity="0.85"/><path d="M739.8,382.6Q727.6,371.0 719.3,378.6" stroke="#ef919b" stroke-width="4.3" opacity="0.94"/><path d="M983.6,327.7Q1006.0,328.7 1027.4,323.5" stroke="#ed8792" stroke-width="4.0" opacity="0.82"/><path d="M962.4,326.6Q977.8,311.9 997.0,311.0" stroke="#fdddde" stroke-width="3.6" opacity="0.83"/><path d="M979.3,324.3Q997.7,322.2 1015.7,317.8" stroke="#f9b8bd" stroke-width="4.6" opacity="0.88"/><path d="M926.2,379.6Q946.0,396.0 968.6,407.7" stroke="#f39fa7" stroke-width="4.1" opacity="0.82"/><path d="M826.7,291.3Q822.6,279.0 814.0,269.9" stroke="#f6abb1" stroke-width="3.7" opacity="0.99"/><path d="M782.2,354.3Q758.3,357.1 734.3,358.7" stroke="#f29ba3" stroke-width="4.2" opacity="0.85"/><path d="M929.9,353.2Q955.5,364.4 982.9,365.0" stroke="#ed8691" stroke-width="3.9" opacity="0.99"/><path d="M871.6,465.0Q875.9,477.8 874.8,490.7" stroke="#fddddf" stroke-width="4.8" opacity="0.86"/><path d="M799.2,359.4Q773.3,363.0 747.5,367.6" stroke="#ef919b" stroke-width="4.8" opacity="0.92"/><path d="M895.8,226.4Q904.4,208.1 907.2,188.5" stroke="#f8b5ba" stroke-width="4.8" opacity="0.93"/><path d="M805.2,396.5Q783.7,408.5 764.8,424.0" stroke="#f8b3b8" stroke-width="4.5" opacity="0.84"/><path d="M938.4,306.5Q947.3,295.3 959.9,289.6" stroke="#ed8893" stroke-width="4.8" opacity="0.98"/><path d="M875.2,271.3Q885.5,253.9 884.4,235.0" stroke="#ec838e" stroke-width="3.0" opacity="0.96"/><path d="M922.6,389.4Q943.4,406.8 964.8,423.4" stroke="#f7b0b5" stroke-width="4.6" opacity="0.88"/><path d="M887.2,418.9Q884.1,435.9 890.0,451.1" stroke="#f7b0b5" stroke-width="3.6" opacity="0.87"/><path d="M897.3,396.2Q901.4,409.9 909.2,421.7" stroke="#f9b9bd" stroke-width="3.0" opacity="0.85"/><path d="M844.8,425.6Q848.7,441.0 842.0,453.7" stroke="#ee8b95" stroke-width="2.9" opacity="0.88"/><path d="M928.7,324.3Q951.2,323.3 970.9,313.6" stroke="#ec8490" stroke-width="4.0" opacity="0.82"/><path d="M992.0,301.8Q1003.2,295.7 1015.3,291.8" stroke="#ee8d97" stroke-width="3.7" opacity="0.96"/><path d="M902.8,256.3Q923.4,235.3 929.9,208.1" stroke="#ec838f" stroke-width="2.9" opacity="0.90"/><path d="M943.9,365.5Q964.3,365.9 983.6,371.8" stroke="#f6acb2" stroke-width="3.1" opacity="0.89"/><path d="M803.3,334.0Q778.0,332.2 753.5,326.5" stroke="#f0939d" stroke-width="4.6" opacity="0.82"/><path d="M969.4,378.8Q987.2,381.5 1004.0,387.7" stroke="#f7b0b5" stroke-width="3.3" opacity="0.82"/><path d="M907.5,304.9Q925.6,294.4 937.9,278.2" stroke="#f7afb5" stroke-width="4.9" opacity="0.99"/><path d="M957.5,248.7Q971.2,247.9 975.4,237.9" stroke="#feebec" stroke-width="3.7" opacity="0.82"/><path d="M796.2,386.8Q776.1,401.9 753.6,412.8" stroke="#f7aeb3" stroke-width="3.6" opacity="0.92"/><path d="M963.4,257.1Q968.2,243.0 979.6,235.3" stroke="#ec838f" stroke-width="3.4" opacity="0.81"/><path d="M891.5,237.4Q904.5,217.0 906.5,193.9" stroke="#f199a1" stroke-width="4.5" opacity="0.89"/><path d="M815.5,453.2Q818.4,474.7 806.4,489.5" stroke="#fde4e5" stroke-width="5.6" opacity="0.87"/><path d="M811.9,275.8Q796.2,257.8 781.5,239.0" stroke="#f199a2" stroke-width="3.8" opacity="0.83"/><path d="M898.0,409.2Q911.1,420.7 916.1,436.4" stroke="#f29ca5" stroke-width="5.0" opacity="0.93"/><path d="M896.8,263.0Q897.6,239.7 906.3,218.7" stroke="#f4a5ac" stroke-width="2.9" opacity="0.84"/><path d="M925.0,257.7Q933.3,241.7 943.1,226.7" stroke="#f198a1" stroke-width="4.7" opacity="0.96"/><path d="M933.8,299.8Q950.0,277.4 972.9,263.0" stroke="#fde0e1" stroke-width="5.3" opacity="0.94"/><path d="M818.5,381.5Q799.0,395.8 778.8,409.0" stroke="#f39fa6" stroke-width="3.5" opacity="0.89"/><path d="M836.1,447.2Q827.1,470.8 819.4,494.8" stroke="#feeeef" stroke-width="5.3" opacity="0.83"/><path d="M929.1,428.4Q938.2,437.8 945.4,448.7" stroke="#fde0e1" stroke-width="5.2" opacity="0.97"/><path d="M961.6,378.5Q974.1,375.8 984.1,381.6" stroke="#f8b5b9" stroke-width="4.5" opacity="0.99"/><path d="M813.2,338.1Q799.7,335.2 786.1,333.2" stroke="#f7afb4" stroke-width="4.8" opacity="0.96"/><path d="M819.7,368.6Q805.5,369.9 793.4,376.4" stroke="#f0939d" stroke-width="3.9" opacity="0.83"/><path d="M947.1,301.2Q968.4,288.5 989.8,275.8" stroke="#feebec" stroke-width="5.5" opacity="0.96"/><path d="M932.9,328.6Q946.6,320.4 962.0,317.0" stroke="#f29da5" stroke-width="3.4" opacity="0.83"/><path d="M980.4,350.6Q993.7,351.5 1007.0,351.7" stroke="#f3a0a7" stroke-width="4.2" opacity="0.97"/><path d="M851.7,411.3Q841.8,434.2 835.9,458.3" stroke="#f4a4ab" stroke-width="4.6" opacity="0.89"/><path d="M836.4,479.0Q828.2,486.4 828.0,496.2" stroke="#f197a0" stroke-width="3.1" opacity="0.91"/><path d="M749.0,330.7Q730.0,321.9 709.7,321.0" stroke="#fddfe1" stroke-width="3.7" opacity="0.94"/><path d="M889.9,244.0Q888.3,216.0 895.5,189.5" stroke="#f9b6ba" stroke-width="4.0" opacity="0.84"/><path d="M881.1,290.8Q883.1,273.7 886.9,257.0" stroke="#f198a1" stroke-width="3.1" opacity="0.83"/><path d="M772.0,344.0Q748.7,343.2 725.5,342.3" stroke="#f8b5ba" stroke-width="3.9" opacity="0.87"/><path d="M869.6,280.8Q878.2,258.3 876.2,235.2" stroke="#fde4e5" stroke-width="4.3" opacity="0.81"/><path d="M779.1,425.9Q761.4,434.9 747.8,448.8" stroke="#fee9ea" stroke-width="4.2" opacity="0.85"/><path d="M910.1,301.5Q925.7,278.9 944.2,258.9" stroke="#f5a8af" stroke-width="4.4" opacity="0.82"/><path d="M898.7,257.4Q901.2,238.9 907.8,221.6" stroke="#fddbdd" stroke-width="5.0" opacity="0.91"/><path d="M940.7,304.6Q962.6,297.0 981.4,284.1" stroke="#fddbdd" stroke-width="3.6" opacity="0.98"/><path d="M938.5,314.5Q950.8,306.6 964.1,300.8" stroke="#fee7e8" stroke-width="5.1" opacity="0.91"/><path d="M874.0,262.8Q871.7,239.3 873.9,216.0" stroke="#ee8c97" stroke-width="3.9" opacity="0.98"/><path d="M856.1,265.9Q853.0,250.5 850.6,235.0" stroke="#feeeee" stroke-width="5.2" opacity="0.97"/><path d="M847.6,240.0Q832.7,225.0 832.6,206.1" stroke="#fddfe1" stroke-width="3.7" opacity="0.85"/><path d="M826.5,424.8Q815.4,442.2 805.6,460.3" stroke="#ef909a" stroke-width="4.7" opacity="0.96"/><path d="M791.3,376.2Q766.5,376.5 744.8,386.8" stroke="#ed8893" stroke-width="4.8" opacity="0.84"/><path d="M778.5,292.5Q769.5,282.5 757.8,277.0" stroke="#f6adb3" stroke-width="4.6" opacity="0.83"/><path d="M871.1,264.4Q872.7,238.9 872.9,213.3" stroke="#fee8e8" stroke-width="5.0" opacity="0.99"/><path d="M914.0,306.8Q921.7,295.4 932.2,287.0" stroke="#f5a8af" stroke-width="3.2" opacity="0.81"/><path d="M757.2,320.8Q740.8,305.3 720.4,304.0" stroke="#feeeee" stroke-width="5.2" opacity="0.85"/><path d="M780.3,442.3Q761.1,446.1 752.4,460.8" stroke="#ed8994" stroke-width="3.2" opacity="0.89"/><path d="M749.6,335.4Q736.1,321.7 720.2,324.2" stroke="#feedee" stroke-width="3.7" opacity="0.82"/><path d="M822.2,373.4Q801.6,382.5 782.2,393.7" stroke="#f197a0" stroke-width="4.6" opacity="0.95"/><path d="M888.1,448.2Q903.5,465.9 903.9,487.3" stroke="#fee7e8" stroke-width="4.8" opacity="0.89"/><path d="M930.5,234.4Q929.2,220.9 937.0,212.0" stroke="#ee8c97" stroke-width="3.9" opacity="0.90"/><path d="M918.4,378.7Q936.3,397.6 958.6,410.2" stroke="#fdddde" stroke-width="4.7" opacity="0.81"/><path d="M800.1,352.2Q780.1,361.2 758.9,360.6" stroke="#f4a4ab" stroke-width="3.0" opacity="0.94"/><path d="M925.0,349.6Q946.9,356.2 969.4,355.7" stroke="#f29ba4" stroke-width="2.9" opacity="0.93"/><path d="M906.8,395.2Q915.4,415.2 929.6,431.2" stroke="#fddedf" stroke-width="4.7" opacity="0.88"/><path d="M927.0,305.0Q942.1,284.8 962.9,271.7" stroke="#ed8893" stroke-width="4.6" opacity="0.95"/><path d="M766.2,262.3Q761.8,248.4 750.3,242.5" stroke="#ee8a95" stroke-width="2.9" opacity="0.94"/><path d="M887.5,255.8Q885.2,241.4 889.5,228.0" stroke="#ed8792" stroke-width="4.6" opacity="0.97"/><path d="M749.2,299.5Q731.8,306.9 719.9,297.3" stroke="#fde3e4" stroke-width="4.0" opacity="0.93"/><path d="M814.7,404.2Q805.1,428.6 785.8,444.8" stroke="#fddcde" stroke-width="5.9" opacity="0.95"/><path d="M762.9,335.6Q746.2,328.2 728.4,327.9" stroke="#fde5e6" stroke-width="5.5" opacity="0.99"/><path d="M863.0,212.2Q864.2,202.3 863.2,192.5" stroke="#f0929b" stroke-width="3.8" opacity="0.85"/><path d="M904.1,458.4Q910.8,480.9 917.9,503.2" stroke="#f6adb3" stroke-width="4.3" opacity="0.93"/><path d="M956.7,395.1Q977.3,411.5 1000.9,422.9" stroke="#fddedf" stroke-width="5.3" opacity="0.89"/><path d="M821.3,268.4Q809.9,256.5 802.5,242.2" stroke="#ec838e" stroke-width="3.3" opacity="0.90"/><path d="M774.6,409.9Q756.4,415.0 742.2,426.5" stroke="#f39ea6" stroke-width="4.1" opacity="0.96"/><path d="M850.5,255.5Q842.1,237.6 839.5,218.3" stroke="#fef0f0" stroke-width="5.7" opacity="0.91"/><path d="M829.4,305.6Q811.6,288.6 794.8,270.7" stroke="#f4a4ab" stroke-width="4.9" opacity="0.86"/><path d="M858.8,456.7Q864.7,477.5 860.3,497.8" stroke="#fddcdd" stroke-width="4.3" opacity="0.87"/><path d="M945.0,410.8Q957.5,427.2 973.9,439.2" stroke="#fde3e4" stroke-width="4.6" opacity="0.81"/><path d="M857.8,285.8Q852.0,272.6 850.3,258.5" stroke="#f7b1b6" stroke-width="3.5" opacity="0.96"/><path d="M924.4,306.1Q941.0,286.1 962.3,271.8" stroke="#f4a2aa" stroke-width="4.6" opacity="0.96"/><path d="M943.3,262.3Q962.5,248.3 976.6,229.5" stroke="#ed8691" stroke-width="3.8" opacity="0.99"/><path d="M826.3,284.0Q819.0,268.3 808.6,254.5" stroke="#ef909a" stroke-width="3.9" opacity="0.99"/><path d="M870.0,218.5Q863.1,202.6 865.5,186.5" stroke="#f9b9bd" stroke-width="3.5" opacity="0.80"/><path d="M824.4,419.1Q806.8,438.6 794.0,461.2" stroke="#fee9e9" stroke-width="4.5" opacity="0.84"/><path d="M856.5,440.1Q847.4,458.5 846.6,478.3" stroke="#ed8893" stroke-width="3.0" opacity="0.95"/><path d="M783.6,387.2Q763.2,395.5 743.2,405.0" stroke="#fee9e9" stroke-width="5.8" opacity="0.97"/><path d="M860.5,423.4Q857.6,449.5 854.4,475.5" stroke="#f6acb2" stroke-width="4.8" opacity="0.91"/><path d="M779.1,419.6Q764.2,428.3 751.3,439.6" stroke="#fdddde" stroke-width="3.7" opacity="0.84"/><path d="M949.0,260.8Q957.8,243.4 971.8,230.6" stroke="#fde4e5" stroke-width="5.7" opacity="0.97"/><path d="M777.9,266.7Q766.2,255.3 753.8,244.7" stroke="#f5a7ae" stroke-width="2.9" opacity="0.81"/><path d="M883.7,435.1Q888.8,454.3 891.4,473.9" stroke="#f198a1" stroke-width="3.6" opacity="0.84"/><path d="M915.7,432.5Q925.5,451.1 935.6,469.5" stroke="#f5a9af" stroke-width="2.8" opacity="0.99"/><path d="M976.9,313.0Q994.3,298.8 1015.3,294.6" stroke="#ec848f" stroke-width="4.4" opacity="0.93"/><path d="M742.0,326.4Q734.0,313.5 722.8,315.8" stroke="#fde2e3" stroke-width="4.1" opacity="0.85"/><path d="M794.4,449.4Q784.4,459.7 776.6,471.5" stroke="#f39fa7" stroke-width="4.1" opacity="0.95"/><path d="M947.5,337.9Q957.1,328.2 968.8,329.5" stroke="#f4a2a9" stroke-width="4.3" opacity="0.91"/><path d="M919.2,260.8Q920.1,242.6 930.6,229.4" stroke="#feeded" stroke-width="4.3" opacity="0.85"/><path d="M936.8,340.0Q961.4,327.8 988.0,327.0" stroke="#fddedf" stroke-width="5.2" opacity="0.97"/><path d="M977.1,388.5Q988.8,392.5 1000.3,397.0" stroke="#fee7e8" stroke-width="3.6" opacity="0.80"/><path d="M823.9,406.7Q809.3,429.5 792.4,450.5" stroke="#f9b6ba" stroke-width="3.0" opacity="0.97"/><path d="M788.2,312.0Q769.4,304.9 751.2,296.6" stroke="#f29ca4" stroke-width="3.8" opacity="0.84"/><path d="M936.8,428.4Q955.9,439.4 967.6,457.0" stroke="#f7b1b6" stroke-width="3.9" opacity="0.93"/><path d="M865.1,242.8Q862.8,227.1 862.6,211.4" stroke="#fef1f1" stroke-width="5.2" opacity="0.91"/><path d="M805.1,384.8Q799.7,397.5 788.3,401.0" stroke="#fde6e6" stroke-width="4.0" opacity="0.84"/><path d="M786.7,267.8Q777.2,258.5 767.6,249.3" stroke="#fde5e6" stroke-width="5.5" opacity="0.80"/><path d="M811.7,388.1Q796.2,405.4 776.7,417.5" stroke="#fddfe0" stroke-width="3.6" opacity="0.88"/><path d="M904.4,280.2Q905.2,262.3 914.8,248.5" stroke="#f7b0b6" stroke-width="3.1" opacity="0.93"/><path d="M955.0,340.9Q966.6,342.3 977.9,340.7" stroke="#fde5e6" stroke-width="4.0" opacity="0.95"/><path d="M954.8,298.3Q965.0,279.8 983.0,273.3" stroke="#ef8f99" stroke-width="3.6" opacity="0.94"/><path d="M771.7,380.8Q753.0,375.3 738.2,384.1" stroke="#fde6e7" stroke-width="4.2" opacity="0.86"/><path d="M975.9,282.4Q987.5,269.4 1002.7,262.1" stroke="#fde3e4" stroke-width="5.7" opacity="0.89"/><path d="M883.1,430.9Q892.7,443.6 892.7,458.3" stroke="#f4a2a9" stroke-width="4.5" opacity="1.00"/><path d="M818.1,381.0Q804.5,397.2 786.4,407.2" stroke="#fddcdd" stroke-width="4.4" opacity="0.87"/><path d="M998.8,352.9Q1015.2,348.5 1031.4,350.9" stroke="#f1969f" stroke-width="4.1" opacity="0.81"/><path d="M963.4,309.2Q986.7,304.7 1007.8,294.7" stroke="#f39ea6" stroke-width="3.6" opacity="0.96"/><path d="M900.3,266.5Q909.5,251.8 914.6,235.5" stroke="#f198a1" stroke-width="4.5" opacity="0.89"/><path d="M918.6,282.4Q931.1,267.1 942.8,251.2" stroke="#f39fa7" stroke-width="3.9" opacity="0.95"/><path d="M866.4,236.9Q855.2,216.4 857.8,194.8" stroke="#ec8590" stroke-width="3.2" opacity="0.88"/><path d="M789.0,338.0Q773.7,340.4 758.9,337.4" stroke="#f4a3aa" stroke-width="4.8" opacity="0.82"/><path d="M969.6,371.8Q989.4,385.4 1012.2,388.4" stroke="#f0939d" stroke-width="3.8" opacity="0.97"/><path d="M743.3,305.1Q732.8,300.4 721.8,297.1" stroke="#f29ca5" stroke-width="4.5" opacity="0.82"/><path d="M750.7,288.4Q747.9,271.5 735.7,270.9" stroke="#f9b9bd" stroke-width="2.8" opacity="0.94"/><path d="M841.8,244.9Q835.1,223.7 829.6,202.3" stroke="#fde4e5" stroke-width="5.6" opacity="0.86"/><path d="M753.7,392.0Q738.9,404.6 720.8,409.3" stroke="#f6abb1" stroke-width="4.8" opacity="0.82"/><path d="M787.4,328.1Q766.3,323.3 745.3,318.3" stroke="#f7aeb4" stroke-width="4.9" opacity="0.97"/><path d="M823.5,467.7Q828.6,481.2 821.4,490.6" stroke="#f5a8ae" stroke-width="2.8" opacity="0.82"/><path d="M848.1,396.6Q841.2,419.5 831.1,441.2" stroke="#f5a6ac" stroke-width="3.0" opacity="0.83"/><path d="M826.5,442.0Q819.2,458.7 811.5,475.3" stroke="#fef0f0" stroke-width="4.2" opacity="0.88"/><path d="M948.5,346.0Q962.5,340.4 976.9,341.7" stroke="#ee8b96" stroke-width="3.4" opacity="0.85"/><path d="M940.6,425.5Q962.4,434.0 974.7,452.1" stroke="#feeaeb" stroke-width="5.9" opacity="0.98"/><path d="M947.6,267.3Q958.6,249.2 974.1,235.3" stroke="#fef1f1" stroke-width="4.1" opacity="0.83"/><path d="M823.2,254.1Q822.1,237.9 813.5,225.1" stroke="#f29aa2" stroke-width="4.3" opacity="0.91"/><path d="M885.7,291.1Q887.4,278.8 891.3,267.2" stroke="#ec828e" stroke-width="2.9" opacity="0.97"/><path d="M896.3,232.3Q900.5,216.6 904.0,200.7" stroke="#f5a7ae" stroke-width="4.5" opacity="0.85"/><path d="M826.8,275.0Q823.2,248.9 808.1,228.7" stroke="#f8b4b9" stroke-width="4.8" opacity="0.93"/><path d="M778.3,250.0Q777.2,239.7 769.7,234.9" stroke="#f3a1a8" stroke-width="4.4" opacity="0.91"/><path d="M824.8,303.0Q809.0,293.6 797.1,280.1" stroke="#ec8490" stroke-width="4.2" opacity="0.93"/><path d="M811.5,334.9Q793.1,327.6 773.8,324.3" stroke="#ef8e98" stroke-width="4.6" opacity="0.93"/><path d="M822.2,380.4Q811.8,392.4 798.4,400.4" stroke="#fee8e8" stroke-width="5.8" opacity="0.99"/><path d="M905.8,417.1Q910.8,433.6 919.5,448.2" stroke="#fdddde" stroke-width="3.6" opacity="0.84"/><path d="M803.0,283.2Q777.9,274.2 762.0,254.7" stroke="#feeded" stroke-width="4.6" opacity="0.94"/><path d="M929.5,393.1Q945.6,412.7 966.4,426.6" stroke="#fddee0" stroke-width="5.3" opacity="0.93"/><path d="M960.0,358.1Q986.0,367.8 1013.3,369.3" stroke="#ed8994" stroke-width="4.6" opacity="0.89"/><path d="M773.5,299.3Q746.1,297.7 724.3,283.4" stroke="#f6acb2" stroke-width="3.6" opacity="0.83"/><path d="M747.8,295.4Q739.6,279.4 724.6,277.2" stroke="#ee8d97" stroke-width="3.9" opacity="0.93"/><path d="M786.9,261.8Q781.3,247.2 769.7,238.1" stroke="#fde5e6" stroke-width="4.2" opacity="0.90"/><path d="M751.7,294.7Q739.0,284.5 724.1,279.3" stroke="#f3a0a8" stroke-width="4.6" opacity="0.84"/><path d="M928.3,279.1Q940.0,267.8 950.1,255.3" stroke="#feeaea" stroke-width="4.9" opacity="0.92"/><path d="M815.0,316.9Q795.1,308.1 776.4,297.1" stroke="#f8b4b9" stroke-width="3.7" opacity="0.82"/><path d="M801.3,297.9Q787.4,281.5 769.6,270.2" stroke="#f0929c" stroke-width="4.6" opacity="0.97"/><path d="M934.2,341.1Q952.9,332.1 972.9,332.0" stroke="#ef8f99" stroke-width="4.1" opacity="0.96"/><path d="M805.4,370.7Q788.9,383.7 769.3,389.0" stroke="#ed8792" stroke-width="4.7" opacity="0.86"/><path d="M821.8,368.8Q796.1,374.2 772.8,385.9" stroke="#f5a8af" stroke-width="2.9" opacity="0.98"/><path d="M784.3,424.5Q761.0,428.8 748.0,445.7" stroke="#fef1f1" stroke-width="5.1" opacity="0.82"/><path d="M884.6,287.4Q894.6,272.3 897.3,255.0" stroke="#f7b1b6" stroke-width="4.3" opacity="0.86"/><path d="M935.2,305.1Q948.5,303.9 957.7,295.6" stroke="#f0949d" stroke-width="4.6" opacity="0.81"/><path d="M961.4,316.9Q987.1,313.9 1010.8,304.5" stroke="#f7aeb4" stroke-width="3.7" opacity="0.90"/><path d="M817.9,255.1Q808.2,240.6 800.1,225.2" stroke="#fddcde" stroke-width="4.4" opacity="0.98"/><path d="M858.9,256.4Q860.1,236.4 856.8,216.9" stroke="#fde1e2" stroke-width="3.8" opacity="0.85"/><path d="M858.2,402.4Q848.9,419.7 846.4,438.7" stroke="#ed8994" stroke-width="4.5" opacity="0.87"/><path d="M817.0,446.3Q798.6,459.7 791.4,479.7" stroke="#f9b6bb" stroke-width="4.0" opacity="0.94"/><path d="M848.1,265.0Q844.2,251.5 840.8,237.8" stroke="#fee9ea" stroke-width="4.8" opacity="0.90"/><path d="M869.6,461.4Q859.2,477.5 862.5,494.2" stroke="#fde3e4" stroke-width="4.5" opacity="0.94"/><path d="M895.3,236.1Q911.2,220.1 912.1,199.8" stroke="#f3a0a8" stroke-width="3.4" opacity="0.90"/><path d="M936.6,375.1Q956.9,392.9 981.9,400.9" stroke="#ee8b96" stroke-width="3.4" opacity="0.99"/><path d="M862.9,273.5Q864.0,256.5 861.7,239.7" stroke="#f8b5ba" stroke-width="4.2" opacity="0.80"/><path d="M835.5,288.8Q826.3,277.1 819.4,263.9" stroke="#f3a1a8" stroke-width="3.8" opacity="0.86"/><path d="M837.9,303.6Q835.3,289.0 825.8,278.8" stroke="#f5a8af" stroke-width="3.8" opacity="0.92"/><path d="M787.4,438.1Q778.5,453.6 765.7,465.8" stroke="#f6adb3" stroke-width="3.7" opacity="0.82"/><path d="M789.8,451.4Q790.4,465.9 780.7,473.1" stroke="#ec8490" stroke-width="4.3" opacity="0.93"/><path d="M763.9,375.3Q740.5,370.9 719.9,379.5" stroke="#feebeb" stroke-width="3.9" opacity="0.82"/><path d="M968.3,426.1Q973.2,446.4 989.3,453.9" stroke="#fddedf" stroke-width="5.0" opacity="0.85"/><path d="M860.9,399.1Q851.3,419.4 849.0,441.3" stroke="#f1969f" stroke-width="4.4" opacity="0.93"/><path d="M830.0,258.5Q827.3,230.7 814.1,207.0" stroke="#f7afb5" stroke-width="4.5" opacity="0.85"/><path d="M888.0,415.7Q897.7,432.8 901.5,451.7" stroke="#f9b6bb" stroke-width="3.3" opacity="0.81"/><path d="M884.1,249.5Q882.5,233.7 886.0,218.6" stroke="#f7afb5" stroke-width="3.6" opacity="0.84"/><path d="M892.1,294.7Q901.4,269.0 912.5,244.0" stroke="#f199a1" stroke-width="3.0" opacity="0.81"/><path d="M906.4,474.9Q902.3,487.8 908.0,498.2" stroke="#feeaea" stroke-width="4.7" opacity="0.82"/><path d="M936.5,235.7Q936.0,216.8 947.4,204.4" stroke="#f6aab0" stroke-width="4.5" opacity="0.85"/><path d="M923.4,373.3Q940.9,373.4 954.8,382.2" stroke="#f6adb3" stroke-width="4.7" opacity="0.90"/><path d="M800.2,436.4Q784.4,447.2 774.6,462.9" stroke="#f7aeb4" stroke-width="3.9" opacity="0.87"/><path d="M823.4,288.6Q813.4,270.9 800.3,255.5" stroke="#ef909a" stroke-width="3.7" opacity="0.91"/><path d="M932.3,317.5Q953.2,302.6 976.5,292.6" stroke="#fee8e9" stroke-width="4.1" opacity="0.98"/><path d="M946.9,334.8Q959.0,331.4 971.5,329.8" stroke="#f7b0b5" stroke-width="4.8" opacity="0.89"/><path d="M802.6,380.6Q775.0,384.1 751.8,398.1" stroke="#ee8d98" stroke-width="4.5" opacity="0.90"/><path d="M893.3,444.3Q886.3,458.7 892.7,470.6" stroke="#f4a5ac" stroke-width="3.0" opacity="0.98"/><path d="M982.0,379.7Q1004.1,385.7 1026.1,392.1" stroke="#fde4e5" stroke-width="4.6" opacity="0.88"/><path d="M827.4,444.5Q825.1,464.1 815.8,481.0" stroke="#feeff0" stroke-width="4.1" opacity="0.86"/><path d="M787.7,344.0Q775.2,352.3 762.6,348.9" stroke="#f0939c" stroke-width="3.7" opacity="0.91"/><path d="M815.5,405.3Q804.2,412.5 796.0,422.7" stroke="#fddfe1" stroke-width="5.4" opacity="0.88"/><path d="M928.8,250.5Q949.4,236.5 958.9,215.0" stroke="#fde5e6" stroke-width="3.8" opacity="0.86"/><path d="M760.8,345.4Q741.1,347.7 721.5,346.5" stroke="#f6adb3" stroke-width="3.7" opacity="0.93"/><path d="M829.9,457.3Q832.3,478.9 822.6,496.7" stroke="#f29ba3" stroke-width="4.7" opacity="0.89"/><path d="M959.6,251.5Q969.1,244.1 976.8,235.0" stroke="#ed8792" stroke-width="3.5" opacity="0.85"/><path d="M877.7,281.7Q872.0,261.7 876.6,242.3" stroke="#ec8590" stroke-width="2.9" opacity="0.80"/><path d="M846.7,415.5Q843.5,441.5 834.1,465.6" stroke="#ec838f" stroke-width="3.2" opacity="0.81"/><path d="M885.9,263.7Q885.6,246.2 890.0,229.5" stroke="#f4a2aa" stroke-width="3.1" opacity="0.81"/><path d="M781.4,314.8Q766.7,318.3 755.4,311.2" stroke="#f9b7bc" stroke-width="3.5" opacity="0.88"/><path d="M890.7,424.0Q904.0,443.5 908.1,466.1" stroke="#fef0f0" stroke-width="4.4" opacity="0.99"/><path d="M744.7,380.0Q730.2,380.0 717.0,384.7" stroke="#ec828e" stroke-width="3.7" opacity="0.83"/><path d="M788.6,340.5Q765.3,337.5 741.8,335.7" stroke="#fee7e8" stroke-width="6.0" opacity="0.90"/><path d="M859.1,401.5Q855.7,416.5 852.9,431.7" stroke="#ec838f" stroke-width="4.5" opacity="0.95"/><path d="M949.2,394.8Q959.4,410.8 975.8,417.4" stroke="#fde3e4" stroke-width="5.3" opacity="0.97"/><path d="M773.6,358.5Q757.6,369.5 739.7,368.8" stroke="#f198a0" stroke-width="3.7" opacity="0.91"/><path d="M768.5,436.1Q754.2,439.8 745.6,450.3" stroke="#f8b5b9" stroke-width="5.0" opacity="0.91"/><path d="M765.3,369.4Q751.1,360.4 739.1,366.9" stroke="#ef909a" stroke-width="3.5" opacity="0.94"/><path d="M964.6,409.6Q973.2,430.9 992.1,438.4" stroke="#feedee" stroke-width="4.1" opacity="0.94"/><path d="M995.6,318.4Q1008.2,326.7 1018.2,320.4" stroke="#f39fa7" stroke-width="3.1" opacity="0.97"/><path d="M766.6,315.1Q743.3,308.0 720.0,300.7" stroke="#ed8893" stroke-width="3.3" opacity="0.91"/><path d="M830.7,218.7Q814.4,209.3 814.4,194.1" stroke="#f9b6bb" stroke-width="4.9" opacity="0.91"/><path d="M997.5,370.8Q1005.6,386.1 1018.1,383.5" stroke="#feefef" stroke-width="3.8" opacity="0.90"/><path d="M891.4,470.5Q897.0,484.1 898.4,498.4" stroke="#feebeb" stroke-width="4.8" opacity="0.82"/><path d="M783.6,276.1Q765.0,264.5 748.8,249.9" stroke="#fddcdd" stroke-width="5.8" opacity="0.80"/><path d="M810.9,464.7Q799.4,477.2 793.5,492.6" stroke="#f4a5ac" stroke-width="3.9" opacity="0.82"/><path d="M959.2,306.0Q971.9,292.7 988.6,287.3" stroke="#f3a0a7" stroke-width="3.1" opacity="0.91"/><path d="M919.8,400.5Q923.6,412.3 932.7,419.4" stroke="#fddcde" stroke-width="4.2" opacity="0.89"/><path d="M866.7,456.4Q860.0,475.9 861.4,495.8" stroke="#fde6e7" stroke-width="4.3" opacity="0.94"/><path d="M779.4,317.7Q759.8,319.7 743.1,311.6" stroke="#ef919b" stroke-width="3.4" opacity="0.96"/><path d="M780.6,433.2Q777.0,446.3 766.7,452.9" stroke="#f6aab0" stroke-width="3.4" opacity="0.99"/><path d="M921.4,414.0Q932.3,436.2 948.3,454.6" stroke="#fef1f1" stroke-width="6.0" opacity="0.82"/><path d="M841.1,226.3Q846.0,206.0 838.7,188.0" stroke="#ee8a95" stroke-width="3.8" opacity="0.84"/><path d="M853.4,249.2Q844.0,223.2 841.0,196.1" stroke="#fde4e5" stroke-width="4.5" opacity="0.86"/><path d="M799.6,297.9Q785.8,290.6 773.6,281.1" stroke="#ec838f" stroke-width="5.0" opacity="0.94"/><path d="M825.7,451.9Q813.7,462.9 809.9,477.7" stroke="#f4a2a9" stroke-width="4.5" opacity="0.98"/><path d="M987.9,304.8Q997.6,288.1 1013.7,286.7" stroke="#feeded" stroke-width="3.5" opacity="0.96"/><path d="M814.5,290.2Q796.3,274.1 779.9,256.2" stroke="#feeeee" stroke-width="4.2" opacity="0.93"/><path d="M844.3,413.2Q846.3,430.9 838.2,445.3" stroke="#ed8994" stroke-width="4.3" opacity="0.96"/><path d="M909.1,299.8Q922.2,284.1 935.2,268.3" stroke="#f5a9af" stroke-width="3.8" opacity="0.98"/><path d="M835.1,390.8Q826.7,411.2 812.1,427.3" stroke="#f9b6bb" stroke-width="3.3" opacity="0.98"/><path d="M934.0,264.9Q945.8,259.6 951.3,249.1" stroke="#fddbdd" stroke-width="5.2" opacity="0.98"/><path d="M971.7,378.9Q983.5,379.1 994.2,383.6" stroke="#fde0e1" stroke-width="4.6" opacity="0.83"/><path d="M865.3,432.7Q856.6,444.4 858.6,457.1" stroke="#ef919b" stroke-width="4.4" opacity="0.94"/><path d="M861.4,476.2Q872.3,489.1 867.4,501.8" stroke="#fde4e5" stroke-width="4.6" opacity="0.91"/><path d="M944.7,280.8Q960.2,266.1 976.3,252.1" stroke="#fef0f0" stroke-width="4.7" opacity="0.80"/><path d="M816.8,322.5Q793.4,314.4 771.5,303.4" stroke="#fee8e9" stroke-width="4.8" opacity="0.86"/><path d="M810.8,233.2Q796.9,225.2 793.2,211.5" stroke="#f198a1" stroke-width="4.1" opacity="0.92"/><path d="M795.6,255.6Q784.5,242.4 773.8,228.9" stroke="#fde4e5" stroke-width="5.3" opacity="0.96"/><path d="M957.0,400.0Q968.7,416.9 986.4,424.6" stroke="#f0949d" stroke-width="3.3" opacity="0.96"/><path d="M922.1,442.1Q939.7,461.6 950.7,484.9" stroke="#fee9ea" stroke-width="4.9" opacity="0.93"/><path d="M775.7,325.7Q759.7,325.7 744.7,321.0" stroke="#fde5e6" stroke-width="5.4" opacity="0.97"/><path d="M839.9,298.8Q825.8,278.7 813.3,257.6" stroke="#f7b0b5" stroke-width="2.9" opacity="0.97"/><path d="M786.4,272.4Q770.9,273.2 764.7,262.5" stroke="#feeded" stroke-width="3.7" opacity="0.99"/><path d="M753.5,343.3Q735.9,354.0 717.9,349.8" stroke="#f29ca5" stroke-width="4.3" opacity="0.90"/><path d="M813.0,302.6Q788.9,294.8 771.2,277.9" stroke="#ec848f" stroke-width="3.3" opacity="0.84"/><path d="M934.2,372.4Q950.3,379.2 966.5,385.2" stroke="#f8b3b8" stroke-width="3.3" opacity="0.95"/><path d="M746.8,343.4Q732.4,335.2 717.3,337.3" stroke="#feefef" stroke-width="4.0" opacity="0.84"/><path d="M953.9,274.3Q967.2,269.0 976.5,258.9" stroke="#fde3e4" stroke-width="4.1" opacity="0.99"/><path d="M953.3,373.4Q976.3,380.2 999.2,387.3" stroke="#fde0e1" stroke-width="3.7" opacity="0.98"/><path d="M907.7,410.9Q917.4,434.1 931.2,455.1" stroke="#feebeb" stroke-width="5.4" opacity="0.88"/><path d="M866.7,479.4Q857.2,488.1 860.4,497.5" stroke="#fee7e8" stroke-width="4.4" opacity="0.88"/><path d="M863.8,244.7Q857.6,226.7 858.2,208.2" stroke="#fde4e5" stroke-width="5.0" opacity="0.85"/><path d="M833.8,399.7Q824.3,414.9 814.1,429.5" stroke="#f9b8bc" stroke-width="3.5" opacity="0.81"/><path d="M919.5,378.9Q928.4,386.1 938.2,391.8" stroke="#f5a8af" stroke-width="3.5" opacity="0.98"/><path d="M948.7,329.2Q960.4,326.2 972.2,323.6" stroke="#f29aa2" stroke-width="3.7" opacity="0.99"/><path d="M863.8,400.6Q866.3,426.7 862.4,452.4" stroke="#ed8893" stroke-width="4.0" opacity="0.83"/><path d="M757.3,276.4Q756.4,259.8 744.8,258.1" stroke="#feeced" stroke-width="4.3" opacity="0.85"/><path d="M931.9,437.2Q930.4,456.0 942.5,466.5" stroke="#fde1e2" stroke-width="4.4" opacity="0.83"/><path d="M885.2,222.3Q898.0,210.2 896.0,195.5" stroke="#ec8590" stroke-width="4.0" opacity="0.96"/><path d="M927.0,437.7Q928.7,456.5 940.3,469.6" stroke="#feefef" stroke-width="5.6" opacity="0.86"/><path d="M930.0,331.4Q943.3,334.1 955.0,329.1" stroke="#f5a6ad" stroke-width="2.8" opacity="0.83"/><path d="M914.7,266.7Q926.4,251.5 935.0,234.5" stroke="#f7b0b5" stroke-width="3.1" opacity="0.93"/><path d="M852.0,414.6Q854.7,431.3 848.8,446.3" stroke="#f199a2" stroke-width="3.7" opacity="0.97"/><path d="M918.2,313.1Q932.3,297.5 950.0,286.4" stroke="#f4a4ab" stroke-width="4.5" opacity="0.87"/><path d="M950.2,253.2Q959.2,238.7 970.9,226.4" stroke="#f3a1a9" stroke-width="3.6" opacity="0.84"/><path d="M774.3,422.1Q756.6,424.8 745.7,437.0" stroke="#fee7e8" stroke-width="5.3" opacity="0.85"/><path d="M903.0,419.5Q902.7,437.6 911.9,452.0" stroke="#f7b1b6" stroke-width="4.2" opacity="0.97"/><path d="M828.3,236.3Q823.1,220.2 816.9,204.3" stroke="#f0959f" stroke-width="3.4" opacity="0.81"/><path d="M922.5,224.2Q939.7,220.0 939.8,207.3" stroke="#ef8f99" stroke-width="4.8" opacity="0.80"/><path d="M926.5,302.2Q942.9,300.0 953.0,288.7" stroke="#feeaeb" stroke-width="5.1" opacity="0.94"/><path d="M949.4,392.7Q960.5,398.4 971.3,404.7" stroke="#f0959e" stroke-width="4.4" opacity="0.89"/><path d="M755.6,315.7Q738.4,309.0 720.6,304.6" stroke="#f7b0b5" stroke-width="4.3" opacity="0.94"/><path d="M767.3,406.7Q748.9,412.8 733.0,423.4" stroke="#fee7e8" stroke-width="4.3" opacity="0.87"/><path d="M777.1,324.5Q752.5,323.3 729.2,316.1" stroke="#feefef" stroke-width="4.2" opacity="0.93"/><path d="M772.1,291.6Q750.9,280.5 730.4,268.4" stroke="#fddedf" stroke-width="5.3" opacity="0.92"/><path d="M922.3,333.1Q933.4,325.3 946.3,323.2" stroke="#f29aa2" stroke-width="4.8" opacity="0.88"/><path d="M935.8,332.8Q958.3,327.0 981.0,322.2" stroke="#ed8692" stroke-width="4.7" opacity="0.91"/><path d="M749.4,366.9Q734.8,357.9 721.8,363.9" stroke="#f39ea6" stroke-width="3.2" opacity="0.86"/><path d="M870.9,400.1Q873.6,412.8 873.3,425.7" stroke="#ee8a95" stroke-width="3.6" opacity="0.92"/><path d="M783.0,316.9Q770.1,315.4 758.4,310.3" stroke="#f39ea6" stroke-width="4.4" opacity="0.83"/><path d="M877.8,444.9Q880.3,471.3 882.5,497.7" stroke="#fde1e2" stroke-width="4.6" opacity="0.83"/><path d="M863.8,286.6Q857.3,273.4 857.5,259.3" stroke="#f199a1" stroke-width="4.2" opacity="0.81"/><path d="M899.0,456.6Q896.6,476.1 903.7,493.3" stroke="#fde2e3" stroke-width="5.1" opacity="1.00"/><path d="M951.5,446.2Q969.8,446.8 974.7,460.0" stroke="#f6adb3" stroke-width="4.6" opacity="0.96"/><path d="M887.0,434.1Q896.0,447.7 897.2,463.2" stroke="#f7afb4" stroke-width="3.1" opacity="0.98"/><path d="M952.8,261.1Q972.4,257.5 981.5,242.6" stroke="#fee8e9" stroke-width="4.4" opacity="0.90"/><path d="M809.2,248.5Q791.6,233.2 781.7,212.9" stroke="#fee8e8" stroke-width="4.3" opacity="0.98"/><path d="M819.0,403.5Q797.4,413.4 784.2,431.7" stroke="#fdddde" stroke-width="4.4" opacity="0.87"/><path d="M919.7,287.9Q938.0,274.2 951.4,256.1" stroke="#f3a0a7" stroke-width="4.8" opacity="0.92"/><path d="M804.1,403.4Q783.8,419.9 764.1,437.0" stroke="#fddddf" stroke-width="5.1" opacity="0.92"/><path d="M923.3,447.9Q931.6,466.2 941.4,483.7" stroke="#f6aab0" stroke-width="3.0" opacity="0.81"/><path d="M827.9,406.9Q816.1,417.6 807.9,431.0" stroke="#f8b4b9" stroke-width="2.9" opacity="0.89"/><path d="M813.0,337.4Q791.5,326.3 768.0,323.7" stroke="#ec8490" stroke-width="3.0" opacity="0.86"/><path d="M866.7,244.4Q867.8,220.4 866.7,196.6" stroke="#fde5e6" stroke-width="5.4" opacity="0.83"/><path d="M976.2,265.2Q990.6,266.1 997.5,256.6" stroke="#fde0e1" stroke-width="4.9" opacity="0.84"/><path d="M932.6,335.6Q951.9,327.5 972.4,324.8" stroke="#f1969f" stroke-width="3.0" opacity="0.86"/><path d="M752.7,377.0Q737.3,373.2 724.0,379.1" stroke="#ee8a95" stroke-width="3.5" opacity="0.98"/><path d="M766.4,389.1Q754.9,393.1 743.7,397.8" stroke="#f4a3aa" stroke-width="4.8" opacity="0.97"/><path d="M962.0,272.7Q983.9,267.4 998.3,251.9" stroke="#f6aab0" stroke-width="3.7" opacity="0.86"/><path d="M771.1,406.6Q750.8,415.5 732.4,427.6" stroke="#f1969f" stroke-width="3.2" opacity="0.89"/><path d="M833.5,251.0Q824.4,233.6 818.3,215.0" stroke="#f6abb1" stroke-width="4.2" opacity="0.81"/><path d="M930.0,357.4Q957.6,355.1 984.2,360.9" stroke="#ee8b96" stroke-width="4.7" opacity="0.88"/><path d="M814.5,327.1Q794.2,324.5 775.7,316.5" stroke="#f0939c" stroke-width="3.1" opacity="0.87"/><path d="M798.0,234.8Q800.4,223.5 793.3,217.8" stroke="#f6acb2" stroke-width="3.3" opacity="0.84"/><path d="M884.1,406.1Q887.8,426.6 893.2,446.7" stroke="#feeaeb" stroke-width="5.3" opacity="0.89"/><path d="M843.5,426.4Q835.4,443.2 830.2,461.1" stroke="#f29ca4" stroke-width="3.9" opacity="0.80"/><path d="M895.1,286.4Q902.4,269.6 909.4,252.7" stroke="#ef8f99" stroke-width="3.1" opacity="0.80"/><path d="M948.9,453.5Q968.7,457.6 974.6,473.1" stroke="#f198a1" stroke-width="3.4" opacity="0.91"/><path d="M841.3,287.2Q830.5,262.3 818.8,237.8" stroke="#f4a2aa" stroke-width="4.9" opacity="0.80"/><path d="M944.3,413.3Q961.7,419.7 973.6,432.9" stroke="#feedee" stroke-width="5.4" opacity="0.96"/><path d="M923.5,297.6Q938.3,289.4 949.6,277.3" stroke="#f5a7ae" stroke-width="2.9" opacity="0.88"/><path d="M804.8,456.0Q808.5,475.4 796.6,486.7" stroke="#ec838f" stroke-width="4.1" opacity="0.81"/><path d="M813.0,251.3Q798.8,235.3 789.2,216.4" stroke="#fddcdd" stroke-width="4.1" opacity="0.91"/><path d="M851.5,234.7Q853.6,213.7 848.7,193.6" stroke="#f29ba4" stroke-width="4.9" opacity="0.81"/><path d="M966.7,300.2Q978.2,296.7 988.6,290.9" stroke="#feeeee" stroke-width="5.0" opacity="0.95"/><path d="M906.4,284.4Q910.3,262.1 923.0,244.3" stroke="#f0959e" stroke-width="3.7" opacity="0.96"/><path d="M834.8,396.0Q823.1,408.5 813.6,422.7" stroke="#f29aa3" stroke-width="3.5" opacity="0.81"/><path d="M920.0,378.4Q941.0,389.1 960.9,401.8" stroke="#ed8893" stroke-width="3.8" opacity="0.87"/><path d="M958.3,287.5Q972.6,269.3 992.3,258.5" stroke="#fef0f0" stroke-width="4.7" opacity="0.87"/><path d="M908.2,220.2Q901.7,209.4 907.5,201.8" stroke="#fde4e5" stroke-width="3.8" opacity="0.89"/><path d="M775.6,314.2Q766.5,307.3 755.7,304.7" stroke="#f5a6ad" stroke-width="3.0" opacity="0.87"/><path d="M950.3,285.2Q973.2,274.0 992.2,257.5" stroke="#ec838f" stroke-width="4.4" opacity="0.92"/><path d="M923.1,338.6Q937.7,339.6 951.8,336.3" stroke="#ed8792" stroke-width="4.6" opacity="0.94"/><path d="M972.7,346.0Q994.9,342.0 1017.2,342.8" stroke="#f198a1" stroke-width="4.8" opacity="0.83"/><path d="M934.7,237.9Q936.0,223.2 944.8,212.6" stroke="#ed8994" stroke-width="4.3" opacity="0.96"/><path d="M822.5,375.6Q798.2,383.1 777.3,397.1" stroke="#feebeb" stroke-width="4.4" opacity="0.82"/><path d="M926.2,379.2Q938.2,387.3 951.0,394.0" stroke="#ec8591" stroke-width="4.2" opacity="0.90"/><path d="M825.7,401.5Q820.5,416.3 809.8,426.9" stroke="#f4a5ac" stroke-width="3.0" opacity="0.84"/><path d="M803.7,412.5Q790.0,435.1 770.3,452.1" stroke="#fde4e5" stroke-width="3.9" opacity="0.89"/><path d="M928.0,292.9Q934.9,274.5 950.0,263.9" stroke="#fee9ea" stroke-width="4.1" opacity="0.82"/><path d="M840.5,471.7Q839.5,483.6 836.2,495.0" stroke="#f6adb3" stroke-width="2.9" opacity="0.96"/><path d="M962.7,358.1Q973.9,359.1 985.1,360.5" stroke="#f29aa2" stroke-width="4.0" opacity="0.91"/><path d="M926.2,309.2Q950.3,300.1 970.4,284.8" stroke="#ed8893" stroke-width="4.6" opacity="0.82"/><path d="M826.5,413.8Q816.9,426.0 808.8,439.2" stroke="#fef1f1" stroke-width="5.5" opacity="1.00"/><path d="M951.7,313.6Q967.0,304.9 983.4,298.9" stroke="#f8b2b7" stroke-width="3.8" opacity="0.81"/><path d="M908.8,398.7Q915.7,418.0 929.1,432.8" stroke="#fde5e6" stroke-width="4.7" opacity="0.87"/><path d="M894.1,253.6Q890.7,239.0 896.3,226.5" stroke="#f5a9af" stroke-width="3.3" opacity="0.97"/><path d="M974.2,421.7Q987.5,424.2 996.5,433.0" stroke="#f197a0" stroke-width="4.1" opacity="0.87"/><path d="M813.6,385.8Q801.4,393.8 789.3,402.2" stroke="#fee9e9" stroke-width="5.9" opacity="0.82"/><path d="M807.0,386.9Q788.7,407.3 765.0,420.1" stroke="#f5a8ae" stroke-width="4.9" opacity="0.88"/><path d="M920.9,273.4Q935.4,253.0 949.6,232.3" stroke="#fee8e8" stroke-width="5.1" opacity="0.97"/><path d="M803.5,306.5Q795.6,297.6 785.1,292.4" stroke="#fee8e9" stroke-width="3.6" opacity="0.94"/><path d="M874.1,271.1Q872.7,253.6 874.5,236.2" stroke="#ee8d97" stroke-width="3.4" opacity="0.97"/><path d="M951.0,306.0Q963.8,306.7 973.0,299.6" stroke="#fde0e1" stroke-width="3.8" opacity="0.88"/><path d="M956.7,390.9Q971.9,411.5 994.7,419.2" stroke="#fde5e6" stroke-width="5.0" opacity="0.92"/><path d="M952.6,308.9Q970.9,299.6 989.7,291.1" stroke="#f199a1" stroke-width="3.0" opacity="0.96"/><path d="M949.4,296.0Q964.2,282.3 981.6,272.3" stroke="#feefef" stroke-width="5.1" opacity="0.96"/><path d="M808.4,453.2Q789.3,461.9 783.8,479.3" stroke="#f4a2a9" stroke-width="3.1" opacity="0.85"/><path d="M927.0,269.3Q936.6,259.8 944.1,248.5" stroke="#fddedf" stroke-width="5.2" opacity="0.99"/><path d="M842.6,292.5Q836.4,276.9 828.7,262.0" stroke="#f7b0b5" stroke-width="4.4" opacity="0.80"/><path d="M829.7,283.4Q817.8,260.6 803.9,239.1" stroke="#ed8994" stroke-width="4.0" opacity="0.97"/><path d="M820.8,371.9Q803.7,384.8 784.3,393.5" stroke="#f5a7ad" stroke-width="4.1" opacity="0.89"/><path d="M924.1,339.3Q937.4,335.4 951.1,333.9" stroke="#f199a2" stroke-width="3.2" opacity="0.98"/><path d="M930.4,236.8Q927.8,215.5 940.2,201.4" stroke="#f5a7ae" stroke-width="3.5" opacity="0.95"/><path d="M967.5,363.9Q979.0,372.5 992.3,372.5" stroke="#f199a1" stroke-width="3.5" opacity="0.89"/><path d="M829.4,277.6Q812.4,264.8 804.5,246.3" stroke="#f39fa7" stroke-width="4.6" opacity="0.81"/><path d="M983.5,310.1Q1003.8,306.4 1023.0,299.1" stroke="#ee8d97" stroke-width="3.7" opacity="0.96"/><path d="M927.8,289.4Q948.7,282.3 961.3,265.9" stroke="#fde5e6" stroke-width="3.7" opacity="0.86"/><path d="M916.0,241.4Q914.3,228.0 921.2,218.1" stroke="#feeaea" stroke-width="4.1" opacity="0.93"/><path d="M796.7,337.8Q784.4,342.9 772.9,339.2" stroke="#ef8f99" stroke-width="3.0" opacity="0.81"/><path d="M844.6,427.6Q843.0,449.7 835.2,470.0" stroke="#f1969f" stroke-width="3.1" opacity="0.85"/><path d="M972.1,342.1Q993.2,349.7 1014.2,346.0" stroke="#feeaeb" stroke-width="3.5" opacity="0.85"/><path d="M809.3,266.4Q793.2,260.1 786.6,246.1" stroke="#fddfe0" stroke-width="5.9" opacity="0.92"/><path d="M908.8,420.7Q915.7,440.9 926.6,459.0" stroke="#ed8893" stroke-width="3.1" opacity="0.92"/><path d="M817.4,378.4Q806.3,384.9 795.1,391.6" stroke="#f9b6bb" stroke-width="4.4" opacity="0.97"/><path d="M801.9,413.5Q794.8,423.5 785.6,431.5" stroke="#fef0f1" stroke-width="5.5" opacity="0.85"/><path d="M935.0,300.9Q948.2,299.0 956.9,290.4" stroke="#fde3e4" stroke-width="5.9" opacity="0.87"/><path d="M779.0,341.3Q765.2,348.4 751.6,344.9" stroke="#fddcde" stroke-width="4.5" opacity="0.86"/><path d="M762.9,277.5Q745.2,278.0 734.5,266.9" stroke="#f29ba3" stroke-width="3.4" opacity="0.97"/><path d="M832.3,475.1Q816.3,484.5 816.4,499.6" stroke="#fdddde" stroke-width="5.1" opacity="0.95"/><path d="M805.0,355.9Q791.4,353.9 778.3,356.7" stroke="#f8b2b7" stroke-width="3.1" opacity="0.94"/><path d="M905.4,431.6Q912.0,448.4 919.3,464.9" stroke="#f29ca4" stroke-width="3.9" opacity="0.86"/></g><circle cx="869.5" cy="347.5" r="92" fill="url(#fc)"/><g filter="url(#fb4)"><circle cx="829.5" cy="309.5" r="14" fill="#8a979c" stroke="none" opacity=".55"/><circle cx="893.5" cy="307.5" r="11" fill="#8a979c" stroke="none" opacity=".55"/><circle cx="899.5" cy="399.5" r="15" fill="#8a979c" stroke="none" opacity=".55"/><circle cx="839.5" cy="387.5" r="11" fill="#8a979c" stroke="none" opacity=".55"/><circle cx="861.5" cy="405.5" r="9" fill="#8a979c" stroke="none" opacity=".55"/><circle cx="925.5" cy="355.5" r="9" fill="#8a979c" stroke="none" opacity=".55"/><circle cx="814.5" cy="352.5" r="9" fill="#8a979c" stroke="none" opacity=".55"/><circle cx="919.5" cy="317.5" r="10" fill="#8a979c" stroke="none" opacity=".55"/><circle cx="817.5" cy="327.5" r="10" fill="#8a979c" stroke="none" opacity=".55"/></g><g fill="none" stroke-linecap="round" filter="url(#fb)"><path d="M880.7,318.7Q882.5,312.5 885.0,306.6" stroke="#8d374a" stroke-width="3.1" opacity="0.51"/><path d="M904.0,341.4Q911.7,343.2 918.8,341.0" stroke="#d16577" stroke-width="3.1" opacity="0.69"/><path d="M847.8,350.9Q839.8,349.4 832.2,351.3" stroke="#d86a7c" stroke-width="2.8" opacity="0.69"/><path d="M865.6,334.1Q865.3,328.2 863.3,322.7" stroke="#b14f62" stroke-width="2.8" opacity="0.72"/><path d="M902.6,310.9Q909.1,307.7 913.0,302.0" stroke="#6e2236" stroke-width="2.7" opacity="0.65"/><path d="M843.3,384.9Q840.4,395.2 833.6,403.0" stroke="#cb6173" stroke-width="3.0" opacity="0.81"/><path d="M894.4,346.8Q903.7,349.5 913.1,348.5" stroke="#d36678" stroke-width="3.0" opacity="0.69"/><path d="M873.8,369.2Q877.5,376.3 878.5,384.1" stroke="#953c50" stroke-width="3.2" opacity="0.75"/><path d="M878.0,393.6Q884.5,400.6 884.4,409.1" stroke="#a7495c" stroke-width="2.3" opacity="0.55"/><path d="M876.7,323.1Q877.0,311.1 881.0,299.9" stroke="#6e2236" stroke-width="2.7" opacity="0.89"/><path d="M886.3,341.9Q897.4,340.6 907.9,336.7" stroke="#af4e61" stroke-width="2.1" opacity="0.69"/><path d="M855.5,360.3Q847.8,368.5 839.5,375.9" stroke="#cf6476" stroke-width="3.3" opacity="0.69"/><path d="M858.8,336.9Q849.9,330.3 842.2,322.4" stroke="#c45c6f" stroke-width="3.2" opacity="0.69"/><path d="M899.0,325.5Q904.9,323.3 909.5,319.3" stroke="#983e52" stroke-width="3.4" opacity="0.67"/><path d="M912.0,328.4Q917.1,321.8 924.6,319.9" stroke="#c95f72" stroke-width="3.2" opacity="0.55"/><path d="M887.0,335.5Q895.4,331.3 903.0,325.7" stroke="#722438" stroke-width="2.7" opacity="0.89"/><path d="M917.0,341.8Q927.1,339.9 937.4,338.9" stroke="#812e42" stroke-width="2.2" opacity="0.68"/><path d="M854.7,341.6Q851.6,338.2 847.3,337.0" stroke="#75273a" stroke-width="2.9" opacity="0.84"/><path d="M840.7,331.6Q835.0,325.1 827.3,321.8" stroke="#833044" stroke-width="2.9" opacity="0.59"/><path d="M889.2,339.7Q895.1,338.4 900.5,336.0" stroke="#a34659" stroke-width="3.4" opacity="0.78"/><path d="M836.0,359.7Q827.2,367.1 816.4,370.0" stroke="#d86a7c" stroke-width="2.1" opacity="0.51"/><path d="M866.9,366.7Q867.5,373.1 866.4,379.4" stroke="#a6485b" stroke-width="3.2" opacity="0.64"/><path d="M858.7,361.5Q853.6,366.9 849.2,372.9" stroke="#9e4356" stroke-width="2.8" opacity="0.54"/><path d="M878.6,346.0Q884.8,345.6 891.0,344.5" stroke="#a7485b" stroke-width="3.1" opacity="0.55"/><path d="M829.5,317.0Q824.6,308.1 816.3,303.3" stroke="#c75e70" stroke-width="2.7" opacity="0.60"/><path d="M865.8,336.7Q862.6,326.0 859.0,315.6" stroke="#a6485b" stroke-width="2.1" opacity="0.59"/><path d="M863.7,338.9Q856.0,329.9 849.6,320.1" stroke="#9c4154" stroke-width="3.4" opacity="0.75"/><path d="M884.7,375.2Q886.6,382.5 890.7,388.7" stroke="#812f43" stroke-width="2.2" opacity="0.74"/><path d="M859.6,326.0Q856.8,315.5 851.9,305.8" stroke="#d16578" stroke-width="2.5" opacity="0.70"/><path d="M856.5,383.8Q853.1,387.1 852.3,391.4" stroke="#d16577" stroke-width="2.6" opacity="0.57"/><path d="M901.0,371.2Q907.0,373.6 911.7,377.9" stroke="#ad4d60" stroke-width="3.2" opacity="0.68"/><path d="M895.6,298.3Q903.1,289.7 907.7,279.4" stroke="#75273a" stroke-width="2.4" opacity="0.85"/><path d="M891.6,358.8Q896.5,359.8 900.7,362.4" stroke="#ce6375" stroke-width="2.5" opacity="0.87"/><path d="M854.2,396.5Q849.0,401.4 848.2,407.9" stroke="#943c4f" stroke-width="3.0" opacity="0.56"/><path d="M891.6,338.1Q897.9,336.7 903.5,333.9" stroke="#d7697b" stroke-width="2.3" opacity="0.74"/><path d="M847.2,354.5Q840.3,359.4 832.3,361.2" stroke="#77283b" stroke-width="2.7" opacity="0.79"/><path d="M827.8,342.7Q817.8,343.1 808.1,341.5" stroke="#833044" stroke-width="3.2" opacity="0.80"/><path d="M819.4,358.5Q807.0,355.8 795.7,359.8" stroke="#c75e71" stroke-width="3.3" opacity="0.64"/><path d="M887.5,387.9Q892.8,397.2 896.9,407.1" stroke="#833044" stroke-width="3.3" opacity="0.62"/><path d="M889.1,322.6Q893.1,315.7 898.2,309.6" stroke="#9b4154" stroke-width="3.3" opacity="0.56"/><path d="M902.5,387.7Q902.1,395.3 907.3,398.9" stroke="#853145" stroke-width="2.0" opacity="0.73"/><path d="M914.9,321.1Q920.2,321.4 923.7,318.2" stroke="#d36779" stroke-width="2.5" opacity="0.52"/><path d="M878.2,383.1Q876.2,388.0 878.3,392.1" stroke="#a44659" stroke-width="2.8" opacity="0.64"/><path d="M913.7,319.7Q921.3,312.6 930.3,307.6" stroke="#bc576a" stroke-width="3.2" opacity="0.74"/><path d="M887.7,387.8Q889.6,393.5 892.3,399.0" stroke="#c35c6e" stroke-width="3.1" opacity="0.61"/><path d="M817.8,345.0Q808.2,349.0 798.7,347.2" stroke="#c65d70" stroke-width="2.4" opacity="0.88"/><path d="M838.1,380.9Q827.5,385.5 821.0,394.4" stroke="#b15062" stroke-width="2.6" opacity="0.71"/><path d="M880.0,312.9Q880.9,303.6 884.1,294.8" stroke="#da6b7d" stroke-width="2.7" opacity="0.84"/><path d="M836.3,390.3Q826.8,395.9 821.4,404.9" stroke="#8e384b" stroke-width="3.4" opacity="0.61"/><path d="M847.6,326.8Q841.5,317.0 832.9,309.8" stroke="#8f384c" stroke-width="3.1" opacity="0.83"/><path d="M885.9,369.6Q891.3,373.6 894.7,379.1" stroke="#7f2d41" stroke-width="3.1" opacity="0.50"/><path d="M873.1,358.3Q876.2,363.1 877.7,368.5" stroke="#c05a6c" stroke-width="2.6" opacity="0.54"/><path d="M895.3,353.8Q899.3,357.9 904.5,358.2" stroke="#722538" stroke-width="3.0" opacity="0.86"/><path d="M844.1,344.7Q837.5,345.5 831.0,344.3" stroke="#7a2a3e" stroke-width="3.3" opacity="0.70"/><path d="M892.8,350.0Q904.6,351.5 916.4,352.7" stroke="#be586a" stroke-width="3.2" opacity="0.80"/><path d="M827.0,340.7Q821.0,339.5 814.8,338.6" stroke="#973e51" stroke-width="3.3" opacity="0.56"/><path d="M857.0,334.4Q850.6,325.6 842.9,317.9" stroke="#843145" stroke-width="3.1" opacity="0.64"/><path d="M858.0,339.5Q852.3,335.1 846.3,331.0" stroke="#8c3649" stroke-width="2.4" opacity="0.86"/><path d="M888.0,312.4Q890.8,303.6 895.4,295.7" stroke="#c55d6f" stroke-width="3.4" opacity="0.68"/><path d="M901.1,375.5Q904.7,384.7 912.4,389.8" stroke="#a7485b" stroke-width="2.8" opacity="0.75"/><path d="M883.4,403.2Q884.7,407.5 885.7,411.9" stroke="#9a4053" stroke-width="3.1" opacity="0.74"/><path d="M918.9,360.8Q929.7,365.7 941.2,368.2" stroke="#cd6274" stroke-width="3.3" opacity="0.59"/><path d="M914.0,351.0Q918.1,350.4 922.2,351.1" stroke="#802e42" stroke-width="3.0" opacity="0.65"/><path d="M850.0,373.7Q843.8,383.2 836.8,392.3" stroke="#7d2c40" stroke-width="2.8" opacity="0.58"/><path d="M865.6,327.8Q865.3,317.5 863.0,307.5" stroke="#863246" stroke-width="2.3" opacity="0.68"/><path d="M910.9,343.6Q915.2,344.3 919.4,343.5" stroke="#a14457" stroke-width="2.5" opacity="0.56"/><path d="M878.6,344.3Q884.1,342.8 889.4,340.9" stroke="#953c50" stroke-width="3.2" opacity="0.65"/><path d="M911.9,366.2Q918.4,366.3 923.7,369.5" stroke="#a6485b" stroke-width="2.4" opacity="0.77"/><path d="M871.3,308.4Q872.8,304.5 872.5,300.4" stroke="#74263a" stroke-width="2.6" opacity="0.80"/><path d="M881.6,301.1Q878.6,289.5 883.0,279.4" stroke="#7d2c3f" stroke-width="3.0" opacity="0.85"/><path d="M905.1,358.4Q911.0,356.2 915.8,358.9" stroke="#ae4d60" stroke-width="2.0" opacity="0.80"/><path d="M841.6,347.5Q829.9,348.0 818.2,347.9" stroke="#973e51" stroke-width="3.4" opacity="0.56"/><path d="M859.5,348.2Q854.4,347.6 849.2,348.2" stroke="#8c3649" stroke-width="2.9" opacity="0.56"/><path d="M846.7,322.4Q839.2,317.5 833.8,310.7" stroke="#7d2c40" stroke-width="3.1" opacity="0.85"/><path d="M858.0,331.7Q854.0,325.7 849.7,319.9" stroke="#6e2236" stroke-width="2.5" opacity="0.85"/><path d="M869.2,321.7Q866.3,315.4 867.0,308.9" stroke="#9c4154" stroke-width="3.0" opacity="0.65"/><path d="M878.6,347.1Q885.6,345.5 892.7,345.4" stroke="#8f394c" stroke-width="3.2" opacity="0.58"/><path d="M861.6,306.4Q862.4,299.8 860.6,293.7" stroke="#c75e71" stroke-width="2.3" opacity="0.73"/><path d="M863.5,360.6Q861.6,368.1 858.2,374.9" stroke="#74263a" stroke-width="3.2" opacity="0.66"/><path d="M887.4,335.9Q891.9,333.8 895.9,330.9" stroke="#cf6476" stroke-width="2.3" opacity="0.64"/><path d="M885.0,378.2Q886.9,384.9 890.3,390.8" stroke="#bd586a" stroke-width="2.6" opacity="0.57"/><path d="M888.3,318.7Q893.3,313.3 897.0,307.1" stroke="#d26678" stroke-width="3.5" opacity="0.76"/><path d="M876.2,307.2Q880.8,297.6 881.7,287.2" stroke="#7a2a3e" stroke-width="2.7" opacity="0.77"/><path d="M837.4,359.9Q834.3,363.7 829.9,364.6" stroke="#da6b7d" stroke-width="2.8" opacity="0.65"/><path d="M915.2,359.8Q922.7,360.1 929.6,362.5" stroke="#a44659" stroke-width="2.8" opacity="0.79"/><path d="M848.9,376.7Q846.3,387.8 839.1,396.1" stroke="#ac4c5f" stroke-width="3.2" opacity="0.68"/><path d="M894.1,358.4Q901.1,358.3 906.8,361.7" stroke="#8d374a" stroke-width="3.3" opacity="0.77"/><path d="M885.9,323.6Q892.3,319.4 895.7,313.0" stroke="#a24558" stroke-width="2.5" opacity="0.85"/><path d="M826.4,381.6Q815.5,384.5 808.0,392.1" stroke="#d4677a" stroke-width="2.5" opacity="0.84"/><path d="M914.0,372.1Q922.0,374.4 928.9,378.9" stroke="#993f53" stroke-width="2.6" opacity="0.53"/><path d="M897.2,323.6Q902.6,321.2 906.7,317.0" stroke="#a04457" stroke-width="3.2" opacity="0.70"/><path d="M853.7,310.5Q853.6,304.2 850.6,299.1" stroke="#d7697b" stroke-width="2.0" opacity="0.69"/><path d="M870.0,363.2Q869.6,367.7 869.9,372.3" stroke="#d26678" stroke-width="3.2" opacity="0.65"/><path d="M885.9,293.9Q888.2,288.4 889.7,282.7" stroke="#ac4c5f" stroke-width="3.5" opacity="0.72"/><path d="M883.8,346.8Q890.5,348.3 897.3,347.6" stroke="#ce6375" stroke-width="2.1" opacity="0.78"/><path d="M889.7,346.8Q894.1,344.9 898.6,345.3" stroke="#913a4d" stroke-width="2.9" opacity="0.51"/><path d="M911.5,348.6Q922.3,349.0 933.0,349.3" stroke="#8c3649" stroke-width="2.3" opacity="0.76"/><path d="M892.1,383.8Q893.4,390.3 897.4,395.3" stroke="#be586b" stroke-width="2.3" opacity="0.90"/><path d="M865.6,369.2Q866.7,375.1 865.1,380.7" stroke="#79293d" stroke-width="2.7" opacity="0.69"/><path d="M883.1,397.7Q889.8,402.5 889.9,409.4" stroke="#c05a6c" stroke-width="3.2" opacity="0.54"/><path d="M885.1,350.8Q894.6,352.0 904.0,354.1" stroke="#8c364a" stroke-width="2.4" opacity="0.52"/><path d="M839.7,378.1Q839.3,384.8 834.4,387.7" stroke="#b35164" stroke-width="3.0" opacity="0.62"/><path d="M861.9,340.3Q854.9,330.9 846.3,322.9" stroke="#853145" stroke-width="2.0" opacity="0.66"/><path d="M864.2,315.8Q862.8,306.5 861.2,297.2" stroke="#9b4053" stroke-width="2.0" opacity="0.52"/><path d="M887.6,321.9Q889.3,312.7 895.2,306.2" stroke="#b85467" stroke-width="3.5" opacity="0.71"/><path d="M874.4,339.4Q879.7,332.2 884.2,324.4" stroke="#c15a6d" stroke-width="3.2" opacity="0.51"/><path d="M824.3,320.6Q816.1,317.2 808.7,312.4" stroke="#a94a5d" stroke-width="2.1" opacity="0.61"/><path d="M821.4,324.8Q818.6,320.4 814.1,319.3" stroke="#7b2b3e" stroke-width="3.5" opacity="0.71"/><path d="M840.1,367.9Q835.6,369.1 832.4,372.0" stroke="#883347" stroke-width="2.9" opacity="0.87"/><path d="M879.0,292.0Q877.4,286.7 879.1,281.9" stroke="#c96072" stroke-width="2.6" opacity="0.71"/></g><g filter="url(#fb3)"><circle cx="814.6" cy="185.2" r="2.0" fill="#93a3aa" opacity="0.62"/><circle cx="703.3" cy="367.0" r="2.3" fill="#93a3aa" opacity="0.76"/><circle cx="981.7" cy="225.9" r="2.0" fill="#93a3aa" opacity="0.78"/><circle cx="992.0" cy="228.9" r="1.9" fill="#93a3aa" opacity="0.98"/><circle cx="822.0" cy="507.6" r="2.1" fill="#93a3aa" opacity="0.60"/><circle cx="792.9" cy="203.5" r="2.5" fill="#93a3aa" opacity="0.94"/><circle cx="754.8" cy="466.4" r="2.5" fill="#93a3aa" opacity="0.60"/><circle cx="702.3" cy="325.1" r="2.0" fill="#93a3aa" opacity="0.77"/><circle cx="878.4" cy="508.6" r="2.1" fill="#93a3aa" opacity="0.85"/><circle cx="712.9" cy="411.5" r="2.6" fill="#93a3aa" opacity="0.75"/><circle cx="706.1" cy="383.5" r="2.5" fill="#93a3aa" opacity="0.66"/><circle cx="1022.7" cy="272.4" r="2.4" fill="#93a3aa" opacity="0.63"/><circle cx="1005.0" cy="439.6" r="2.2" fill="#93a3aa" opacity="0.81"/><circle cx="793.5" cy="202.0" r="1.8" fill="#93a3aa" opacity="0.63"/><circle cx="770.2" cy="487.3" r="2.4" fill="#93a3aa" opacity="0.85"/><circle cx="713.0" cy="302.5" r="2.5" fill="#93a3aa" opacity="0.62"/><circle cx="706.0" cy="383.8" r="2.0" fill="#93a3aa" opacity="0.72"/><circle cx="875.9" cy="506.5" r="2.4" fill="#93a3aa" opacity="0.62"/><circle cx="991.2" cy="243.5" r="1.9" fill="#93a3aa" opacity="0.90"/><circle cx="928.0" cy="187.4" r="2.0" fill="#93a3aa" opacity="0.62"/><circle cx="719.0" cy="415.0" r="2.2" fill="#93a3aa" opacity="0.70"/><circle cx="891.3" cy="179.8" r="2.3" fill="#93a3aa" opacity="0.68"/><circle cx="909.8" cy="510.6" r="1.8" fill="#93a3aa" opacity="0.97"/><circle cx="718.1" cy="269.5" r="2.3" fill="#93a3aa" opacity="0.96"/><circle cx="1017.9" cy="263.5" r="2.3" fill="#93a3aa" opacity="0.75"/><circle cx="1017.1" cy="428.5" r="2.3" fill="#93a3aa" opacity="0.61"/><circle cx="825.7" cy="505.3" r="2.1" fill="#93a3aa" opacity="0.88"/><circle cx="808.6" cy="506.0" r="1.9" fill="#93a3aa" opacity="0.94"/><circle cx="720.0" cy="291.6" r="2.5" fill="#93a3aa" opacity="0.68"/><circle cx="716.4" cy="411.4" r="1.8" fill="#93a3aa" opacity="0.72"/><circle cx="1031.8" cy="311.7" r="1.8" fill="#93a3aa" opacity="0.69"/><circle cx="1017.9" cy="417.8" r="2.1" fill="#93a3aa" opacity="0.63"/><circle cx="1019.1" cy="421.0" r="2.0" fill="#93a3aa" opacity="0.83"/><circle cx="720.3" cy="270.1" r="2.1" fill="#93a3aa" opacity="0.74"/><circle cx="814.1" cy="187.6" r="2.4" fill="#93a3aa" opacity="0.88"/><circle cx="1012.6" cy="428.1" r="2.4" fill="#93a3aa" opacity="0.84"/><circle cx="797.6" cy="204.7" r="2.4" fill="#93a3aa" opacity="0.64"/><circle cx="707.1" cy="318.6" r="1.8" fill="#93a3aa" opacity="0.97"/><circle cx="741.4" cy="234.2" r="2.5" fill="#93a3aa" opacity="0.63"/><circle cx="772.5" cy="211.9" r="2.1" fill="#93a3aa" opacity="0.92"/><circle cx="849.5" cy="329.5" r="1.8" fill="#9aa8ad" opacity=".8"/><circle cx="891.5" cy="333.5" r="1.8" fill="#9aa8ad" opacity=".8"/><circle cx="883.5" cy="377.5" r="1.8" fill="#9aa8ad" opacity=".8"/><circle cx="851.5" cy="417.5" r="1.8" fill="#9aa8ad" opacity=".8"/><circle cx="917.5" cy="373.5" r="1.8" fill="#9aa8ad" opacity=".8"/><circle cx="869.5" cy="445.5" r="1.8" fill="#9aa8ad" opacity=".8"/></g></svg>
<svg style="left:0;top:0" width="1325" height="640"><path d="M444.7,109V583H511M1227,583H1293.2V109" fill="none" stroke="#adadb2" stroke-width="1.3"/><rect x="442" y="341.7" width="6" height="6" fill="#a4cbe0" stroke="#7ea4bc" stroke-width=".6"/><rect x="1290" y="341.7" width="6" height="6" fill="#a4cbe0" stroke="#7ea4bc" stroke-width=".6"/><rect x="442" y="580.5" width="6" height="6" fill="#a4cbe0" stroke="#7ea4bc" stroke-width=".6"/><rect x="866" y="580.5" width="6" height="6" fill="#a4cbe0" stroke="#7ea4bc" stroke-width=".6"/><rect x="1290" y="580.5" width="6" height="6" fill="#a4cbe0" stroke="#7ea4bc" stroke-width=".6"/><circle cx="869" cy="344" r="3.2" fill="none" stroke="#cfe0e0" stroke-width="1.4"/><path d="M869,338v3M869,347v3M863,344h3M872,344h3" stroke="#cfe0e0" stroke-width="1.3"/></svg>
<div class="a" style="left:280px;top:631px;width:1045px;height:1px;background:#131313"></div>
<div class="a" style="left:0;top:652.8px;width:1325px;height:2.5px;background:#161616"></div>
<div class="a" style="left:0;top:655.3px;width:1325px;height:1.2px;background:#44484a"></div>
<div class="dd" style="left:319px;width:60px"></div>
<div class="dd" style="left:537px;width:72px"></div>
<div class="dd" style="left:651px;width:89px"></div>
<div class="dd" style="left:742px;width:62px"></div>
<div class="cv" style="left:370px;top:637px"></div>
<div class="cv" style="left:600px;top:637px"></div>
<div class="cv" style="left:730px;top:637px"></div>
<div class="cv" style="left:793px;top:637px"></div>
<div class="t" style="left:324.5px;top:637px;font-size:9.8px;color:#b4b4b4">25%</div>
<div class="t" style="left:426px;top:637px;font-size:9.5px;color:#8a8a8a;letter-spacing:-.3px">0:00:07:05</div>
<div class="t" style="left:541px;top:636.5px;font-size:10.3px;color:#b4b4b4;letter-spacing:.6px">(四分...</div>
<div class="t" style="left:656px;top:636.5px;font-size:10.5px;color:#b4b4b4;letter-spacing:.9px">活动摄像机</div>
<div class="t" style="left:748px;top:636.5px;font-size:10.3px;color:#b4b4b4;letter-spacing:.6px">1个...</div>
<div class="t" style="left:901px;top:637px;font-size:9.5px;color:#6e6e6e;letter-spacing:-.3px">+0.0</div>
<svg style="left:0;top:0" width="1325" height="660"><rect x="284.5" y="637" width="8" height="6.5" fill="#b8c4c2"/><path d="M287,645.5h8.5v-6" fill="none" stroke="#b8c4c2" stroke-width="1.1"/><path d="M289,648h8.5v-6" fill="none" stroke="#b8c4c2" stroke-width="1"/><rect x="303.5" y="637" width="11" height="7.5" fill="none" stroke="#b8c4c2" stroke-width="1.3"/><path d="M309,645v2.5M305.5,648h7" stroke="#b8c4c2" stroke-width="1.3"/><rect x="382.5" y="637" width="11" height="8" fill="none" stroke="#b8c4c2" stroke-width="1.2"/><path d="M388,635v12M385,641h6" stroke="#b8c4c2" stroke-width="1.1"/><polygon points="390,647 394,647 392,649" fill="#b8c4c2"/><rect x="398.5" y="634.5" width="18" height="15" fill="#161616"/><path d="M402,640l10,-2l1.5,9l-11,1z" fill="none" stroke="#8aa0b8" stroke-width="1.2"/><rect x="481.5" y="638.5" width="12.5" height="8.5" rx="1" fill="#b8c4c2"/><rect x="485" y="637" width="5" height="2" fill="#b8c4c2"/><circle cx="487.7" cy="642.8" r="2.3" fill="#222"/><path d="M501,644l5,-5l6,2l-4,6z" fill="#3a3a3a" stroke="#444" stroke-width="1"/><circle cx="526.5" cy="639.5" r="3" fill="#e03030"/><circle cx="524" cy="643.5" r="3" fill="#9aa"/><circle cx="529" cy="643.5" r="3" fill="#3a78d0"/><polygon points="528,648 532,648 530,650" fill="#bbb"/><rect x="614.5" y="637" width="12" height="9.5" rx="1" fill="none" stroke="#b8c4c2" stroke-width="1.2"/><rect x="617" y="639.5" width="7" height="4.5" fill="#b8c4c2"/><rect x="633.5" y="637" width="12" height="9.5" rx="1" fill="none" stroke="#b8c4c2" stroke-width="1.2"/><path d="M635.5,638.5h3v2.5h-3zM641.5,638.5h3v2.5h-3zM638.5,641h3v2.5h-3zM635.5,643.5h3v2h-3zM641.5,643.5h3v2h-3z" fill="#b8c4c2"/><path d="M807,637.5h13M809.5,636v3M817.5,636v3" stroke="#b8c4c2" stroke-width="1.2"/><rect x="809.5" y="641.5" width="8" height="5" fill="none" stroke="#b8c4c2" stroke-width="1.2"/><rect x="826.5" y="637" width="11" height="9.5" fill="none" stroke="#b8c4c2" stroke-width="1.2"/><path d="M833,638.5l-3,4h3l-2,4" fill="none" stroke="#b8c4c2" stroke-width="1.1"/><polygon points="835,647 839,647 837,649.5" fill="#b8c4c2"/><path d="M845.5,640v6.5h11v-6.5M851,637v9" fill="none" stroke="#b8c4c2" stroke-width="1.2"/><rect x="849" y="636" width="4" height="3.5" fill="#b8c4c2"/><rect x="848" y="642" width="6" height="3" fill="#b8c4c2"/><rect x="867" y="636" width="5" height="4" fill="#b8c4c2"/><rect x="863" y="643.5" width="5" height="4" fill="#b8c4c2"/><rect x="871" y="643.5" width="5" height="4" fill="#b8c4c2"/><path d="M869.5,640v2M865.5,643.5v-1.5h8v1.5" fill="none" stroke="#b8c4c2" stroke-width="1"/><rect x="880" y="634" width="1" height="16" fill="#161616"/><circle cx="890.5" cy="642" r="4" fill="none" stroke="#b8c4c2" stroke-width="3" stroke-dasharray="3.2 1"/></svg>
<div class="t" style="left:7.5px;top:662px;font-size:9px;color:#888">×</div>
<div class="a" style="left:21px;top:661px;width:9px;height:9px;background:#8a8f8f"></div>
<div class="t" style="left:39px;top:661.5px;font-size:10px;color:#c6c6c6;letter-spacing:-.45px">6043070</div>
<svg style="left:0;top:0" width="300" height="680"><path d="M84,664h7M84,666.5h7M84,669h7" stroke="#aaa" stroke-width="1"/><rect x="8" y="675.5" width="83" height="2" fill="#b6c4c4"/><rect x="123" y="661" width="9" height="9" fill="#8a8f8f"/></svg>
<div class="t" style="left:143px;top:661.5px;font-size:10.3px;color:#8e8e8e;letter-spacing:.9px">视频预览</div>
<div class="t" style="left:7px;top:680.5px;font-size:16px;font-family:'Liberation Serif',serif;font-weight:bold;color:#3b86d6;letter-spacing:.2px">0:00:07:05</div>
<div class="t" style="left:8px;top:698.5px;font-size:9px;color:#484848;letter-spacing:-.1px">00180 (25.00 fps)</div>
<div class="a" style="left:90px;top:687px;width:299px;height:15px;background:#161616;border-radius:2px"></div>
<svg style="left:0;top:0" width="130" height="710"><circle cx="102.5" cy="692.5" r="3" fill="none" stroke="#bbb" stroke-width="1.2"/><line x1="100.5" y1="695" x2="97" y2="698.5" stroke="#bbb" stroke-width="1.4"/><polygon points="106,696 111,696 108.5,698.5" fill="#bbb"/></svg>
<svg style="left:0;top:0" width="600" height="710"><path d="M403,690h5M408,690v6h5M408,693h5" fill="none" stroke="#b8c4c2" stroke-width="1.2"/><rect x="412" y="691.5" width="3.5" height="3" fill="#b8c4c2"/><rect x="412" y="695" width="3.5" height="3" fill="#b8c4c2"/><rect x="401" y="688.5" width="4" height="3" fill="#b8c4c2"/><path d="M437,692l4,-2l4,2v5l-4,2l-4,-2zM437,692l4,2l4,-2M441,694v5" fill="none" stroke="#b8c4c2" stroke-width="1.1"/><path d="M433,686l2,3M431,690h3M436,685v3" stroke="#b8c4c2" stroke-width="1.1"/><path d="M462,694a5.5,5 0 0 1 11,0z" fill="#b8c4c2"/><path d="M461,696.5h13M467.5,694v6" stroke="#b8c4c2" stroke-width="1.2" stroke-dasharray="1.5 1"/><rect x="487" y="688" width="9" height="10" fill="#b8c4c2"/><path d="M485,690v10h9" fill="none" stroke="#b8c4c2" stroke-width="1.1"/><path d="M489,691h5M489,693.5h5" stroke="#222" stroke-width="1"/><ellipse cx="514.5" cy="692" rx="5" ry="4" fill="#b8c4c2"/><ellipse cx="512.5" cy="694.5" rx="5" ry="4" fill="#778" stroke="#b8c4c2" stroke-width=".8"/><ellipse cx="510.5" cy="696.5" rx="4" ry="3.2" fill="#556" stroke="#b8c4c2" stroke-width=".8"/><rect x="536.5" y="689" width="12" height="10" fill="none" stroke="#b8c4c2" stroke-width="1.2"/><path d="M538,691c5,0 4,7 9,7" fill="none" stroke="#b8c4c2" stroke-width="1.1"/><path d="M538.5,687.5v2M546.5,687.5v2" stroke="#b8c4c2" stroke-width="1.1"/></svg>
<div class="a" style="left:0;top:709px;width:563px;height:1.5px;background:#161616"></div>
<div class="a" style="left:0;top:710.5px;width:563px;height:15.5px;background:#2d2d2f"></div>
<div class="a" style="left:0;top:726px;width:563px;height:1px;background:#161616"></div>
<div class="a" style="left:0;top:727px;width:563px;height:17.5px;background:#3c3c3c"></div>
<div class="a" style="left:132.5px;top:727.5px;width:158.5px;height:16.5px;background:#a2a2a2"></div>
<div class="a" style="left:0;top:744.5px;width:563px;height:1.3px;background:#1a1a1a"></div>
<div class="a" style="left:0;top:746px;width:563px;height:9px;background:#262626"></div>
<div class="a" style="left:431px;top:728px;width:115px;height:16px;background:#1b1b1b;border-radius:2px"></div>
<div class="a" style="left:431px;top:747px;width:115px;height:8px;background:#1b1b1b;border-radius:2px 2px 0 0"></div>
<div class="t" style="left:436px;top:730px;font-size:11px;color:#c0c0c0">无</div>
<div class="t" style="left:436px;top:749px;font-size:11px;color:#c0c0c0">无</div>
<div class="cv" style="left:535px;top:731px"></div>
<div class="cv" style="left:535px;top:750px"></div>
<div class="t" style="left:119px;top:713.5px;font-size:10.8px;color:#b0b0b0;letter-spacing:1px">源名称</div>
<div class="t" style="left:415px;top:713.5px;font-size:10.8px;color:#b0b0b0;letter-spacing:1px">父级</div>
<div class="t" style="left:90.5px;top:714px;font-size:10px;color:#8a8a8a;font-style:italic">#</div>
<div class="t" style="left:90.5px;top:731px;font-size:10px;font-weight:bold;color:#a0a0a0">1</div>
<div class="t" style="left:90.5px;top:749px;font-size:10px;font-weight:bold;color:#a0a0a0">2</div>
<div class="t" style="left:136px;top:731px;font-size:10px;font-weight:bold;color:#111;letter-spacing:-.5px">视频预览.&nbsp;mp4</div>
<div class="t" style="left:136px;top:750px;font-size:10px;font-weight:bold;color:#b8b8b8;letter-spacing:.3px">6043070.&nbsp;jpg</div>
<svg style="left:0;top:0" width="600" height="755"><path d="M3,718.5q5,-5 10,0q-5,5 -10,0z" fill="#c4c4c4"/><circle cx="8" cy="718.5" r="1.7" fill="#222"/><path d="M17,717.0h2l3,-3v9l-3,-3h-2z" fill="#c4c4c4"/><path d="M23.5,715.0q3,3.5 0,7" fill="none" stroke="#c4c4c4" stroke-width="1.1"/><circle cx="34.5" cy="719" r="3" fill="#c4c4c4"/><rect x="44" y="718" width="7.5" height="6" fill="#c4c4c4"/><path d="M45.5,718v-2a2.3,2.3 0 0 1 4.6,0v2" fill="none" stroke="#c4c4c4" stroke-width="1.2"/><rect x="57" y="713" width="1" height="11" fill="#151515"/><rect x="85" y="713" width="1" height="11" fill="#151515"/><rect x="114" y="713" width="1" height="11" fill="#151515"/><path d="M69,714.5h5l5,5l-4.5,4.5l-5,-5z" fill="#c4c4c4"/><circle cx="71.5" cy="717" r="1" fill="#222"/><path d="M3,736q5,-5 10,0q-5,5 -10,0z" fill="#c4c4c4"/><circle cx="8" cy="736" r="1.7" fill="#222"/><path d="M17,734.5h2l3,-3v9l-3,-3h-2z" fill="#c4c4c4"/><path d="M23.5,732.5q3,3.5 0,7" fill="none" stroke="#c4c4c4" stroke-width="1.1"/><path d="M3,754q5,-5 10,0q-5,5 -10,0z" fill="#c4c4c4"/><circle cx="8" cy="754" r="1.7" fill="#222"/><rect x="30" y="729.5" width="10" height="14" fill="#2b2b2b"/><rect x="30" y="747.5" width="10" height="8" fill="#202020"/><rect x="42" y="729.5" width="10" height="14" fill="#2b2b2b"/><rect x="42" y="747.5" width="10" height="8" fill="#202020"/><rect x="19" y="747.5" width="9" height="8" fill="#202020"/><polygon points="61,733 61,740 67,736.5" fill="#c4c4c4"/><polygon points="61,751 61,758 67,754.5" fill="#c4c4c4"/><rect x="73" y="729" width="12" height="15" fill="#a7cfe0"/><rect x="73" y="747" width="12" height="8" fill="#9cbdb8"/><rect x="119" y="730" width="9.5" height="13" rx="1" fill="#f4f4f4"/><rect x="120.5" y="734" width="7" height="6" fill="#2f7fd6"/><rect x="119" y="748" width="9.5" height="8" rx="1" fill="#f4f4f4"/><rect x="120.5" y="751" width="7" height="5" fill="#2f7fd6"/><path d="M296,718a4.7,4 0 0 1 9.4,0zM295,720h11.4M300.7,714v8" fill="none" stroke="#c4c4c4" stroke-width="1.1"/><circle cx="313.5" cy="718.5" r="2" fill="#c4c4c4"/><path d="M313.5,714v9M309,718.5h9M310.5,715.5l6,6M316.5,715.5l-6,6" stroke="#c4c4c4" stroke-width=".9"/><path d="M322,714l9,9" stroke="#c4c4c4" stroke-width="1.3"/><rect x="347.5" y="713.5" width="9.5" height="9.5" fill="none" stroke="#c4c4c4" stroke-width="1.2"/><rect x="350" y="717" width="5" height="4" fill="#c4c4c4"/><ellipse cx="366" cy="716.5" rx="4.5" ry="3.5" fill="#999"/><ellipse cx="364.5" cy="718.5" rx="4.5" ry="3.5" fill="#777" stroke="#c4c4c4" stroke-width=".6"/><ellipse cx="363" cy="720.5" rx="4" ry="3" fill="#555" stroke="#c4c4c4" stroke-width=".6"/><circle cx="378.5" cy="718.5" r="4.3" fill="none" stroke="#c4c4c4" stroke-width="1.1"/><path d="M375.5,721.5a4.3,4.3 0 0 0 6,-6z" fill="#c4c4c4"/><path d="M388,716l4,-2l4,2v5l-4,2l-4,-2zM388,716l4,2l4,-2M392,718v5" fill="none" stroke="#c4c4c4" stroke-width="1"/><rect x="409.5" y="713" width="1" height="11" fill="#151515"/><rect x="549" y="713" width="1" height="11" fill="#151515"/><rect x="294.5" y="729.5" width="11.5" height="13" fill="#2c2c2c"/><rect x="321" y="729.5" width="11.5" height="13" fill="#2c2c2c"/><path d="M296,736a4.7,4 0 0 1 9.4,0zM295,738h11.4M300.7,732v8" fill="none" stroke="#c4c4c4" stroke-width="1.1"/><path d="M322,740l8,-9" stroke="#c4c4c4" stroke-width="1.2"/><rect x="346.8" y="730" width="11.3" height="13" fill="#2b2b2b"/><rect x="359.7" y="730" width="11.3" height="13" fill="#2b2b2b"/><rect x="372.6" y="730" width="11.3" height="13" fill="#2b2b2b"/><rect x="385.5" y="730" width="11.3" height="13" fill="#2b2b2b"/><polyline points="420.0,735.7 420.1,736.0 420.0,736.3 419.8,736.6 419.5,736.9 419.1,737.0 418.6,737.0 418.1,736.8 417.8,736.4 417.5,735.9 417.4,735.3 417.6,734.7 417.9,734.1 418.5,733.7 419.2,733.5 419.9,733.5 420.7,733.8 421.3,734.3 421.8,735.0 421.9,735.9 421.8,736.9 421.3,737.7 420.6,738.4 419.7,738.8 418.6,738.9 417.5,738.6 416.6,738.0 415.9,737.0 415.5,735.9 415.6,734.6 416.1,733.4 416.9,732.4 418.1,731.8 419.5,731.5 420.9,731.8 422.1,732.4 423.1,733.5 423.7,734.9 423.8,736.5 423.4,738.0 422.5,739.3 421.1,740.3 419.5,740.8 417.8,740.7 416.2,740.1 414.8,738.9" fill="none" stroke="#a4a4a4" stroke-width="1.1"/><rect x="294.5" y="747.5" width="11.5" height="13" fill="#1f1f1f"/><rect x="321" y="747.5" width="11.5" height="13" fill="#1f1f1f"/><path d="M296,754a4.7,4 0 0 1 9.4,0zM295,756h11.4M300.7,750v8" fill="none" stroke="#c4c4c4" stroke-width="1.1"/><path d="M322,758l8,-9" stroke="#c4c4c4" stroke-width="1.2"/><rect x="359.7" y="748" width="11.3" height="13" fill="#1e1e1e"/><rect x="372.6" y="748" width="11.3" height="13" fill="#1e1e1e"/><rect x="385.5" y="748" width="11.3" height="13" fill="#1e1e1e"/><polyline points="420.0,753.7 420.1,754.0 420.0,754.3 419.8,754.6 419.5,754.9 419.1,755.0 418.6,755.0 418.1,754.8 417.8,754.4 417.5,753.9 417.4,753.3 417.6,752.7 417.9,752.1 418.5,751.7 419.2,751.5 419.9,751.5 420.7,751.8 421.3,752.3 421.8,753.0 421.9,753.9 421.8,754.9 421.3,755.7 420.6,756.4 419.7,756.8 418.6,756.9 417.5,756.6 416.6,756.0 415.9,755.0 415.5,753.9 415.6,752.6 416.1,751.4 416.9,750.4 418.1,749.8 419.5,749.5 420.9,749.8 422.1,750.4 423.1,751.5 423.7,752.9 423.8,754.5 423.4,756.0 422.5,757.3 421.1,758.3 419.5,758.8 417.8,758.7 416.2,758.1 414.8,756.9" fill="none" stroke="#a4a4a4" stroke-width="1.1"/></svg>
<div class="t" style="left:334px;top:711.5px;font-size:12.5px;font-style:italic;font-family:'Liberation Serif',serif;color:#c4c4c4">fx</div>
<div class="a" style="left:563.3px;top:681px;width:1.2px;height:74px;background:#0f0f0f"></div>
<div class="a" style="left:566px;top:685px;width:759px;height:7px;background:#6d6d6d"></div>
<div class="a" style="left:564px;top:684.5px;width:5px;height:8px;background:#3b86d6;border-radius:4px 0 0 4px"></div>
<div class="a" style="left:564.5px;top:692px;width:761px;height:18px;background:#1f1f1f"></div>
<div class="a" style="left:564.5px;top:710px;width:761px;height:12.5px;background:#616161"></div>
<div class="a" style="left:564.5px;top:710px;width:4.5px;height:12.5px;background:#3b86d6;border-radius:2px 0 0 2px"></div>
<div class="a" style="left:564.5px;top:722.5px;width:761px;height:5px;background:#141414"></div>
<div class="a" style="left:570px;top:728.5px;width:755px;height:14.5px;background:#a6bab6"></div>
<div class="a" style="left:564.5px;top:743px;width:761px;height:2.8px;background:linear-gradient(#3a3a3a,#151515)"></div>
<div class="a" style="left:570px;top:745.8px;width:755px;height:10px;background:#7d7a89"></div>
<div class="a" style="left:564.5px;top:727.5px;width:5.5px;height:28px;background:#1b1b1b"></div>
<div class="t" style="left:568.7px;top:694px;font-size:9.5px;color:#a8a8a8;letter-spacing:.2px">:00s</div>
<div class="t" style="left:633.1px;top:694px;font-size:9.5px;color:#a8a8a8;letter-spacing:.2px">02s</div>
<div class="t" style="left:704.5px;top:694px;font-size:9.5px;color:#a8a8a8;letter-spacing:.2px">04s</div>
<div class="t" style="left:776.0px;top:694px;font-size:9.5px;color:#a8a8a8;letter-spacing:.2px">06s</div>
<div class="t" style="left:847.4px;top:694px;font-size:9.5px;color:#a8a8a8;letter-spacing:.2px">08s</div>
<div class="t" style="left:918.8px;top:694px;font-size:9.5px;color:#a8a8a8;letter-spacing:.2px">10s</div>
<div class="t" style="left:990.2px;top:694px;font-size:9.5px;color:#a8a8a8;letter-spacing:.2px">12s</div>
<div class="t" style="left:1061.6px;top:694px;font-size:9.5px;color:#a8a8a8;letter-spacing:.2px">14s</div>
<div class="t" style="left:1133.1px;top:694px;font-size:9.5px;color:#a8a8a8;letter-spacing:.2px">16s</div>
<div class="t" style="left:1204.5px;top:694px;font-size:9.5px;color:#a8a8a8;letter-spacing:.2px">18s</div>
<div class="t" style="left:1275.9px;top:694px;font-size:9.5px;color:#a8a8a8;letter-spacing:.2px">20s</div>
<svg style="left:0;top:0" width="1325" height="755"><rect x="569.7" y="704.5" width="1" height="5" fill="#bbb"/><rect x="641.1" y="704.5" width="1" height="5" fill="#bbb"/><rect x="712.5" y="704.5" width="1" height="5" fill="#bbb"/><rect x="784.0" y="704.5" width="1" height="5" fill="#bbb"/><rect x="855.4" y="704.5" width="1" height="5" fill="#bbb"/><rect x="926.8" y="704.5" width="1" height="5" fill="#bbb"/><rect x="998.2" y="704.5" width="1" height="5" fill="#bbb"/><rect x="1069.6" y="704.5" width="1" height="5" fill="#bbb"/><rect x="1141.1" y="704.5" width="1" height="5" fill="#bbb"/><rect x="1212.5" y="704.5" width="1" height="5" fill="#bbb"/><rect x="1283.9" y="704.5" width="1" height="5" fill="#bbb"/><rect x="571" y="724" width="1.5" height="1.5" fill="#777"/><rect x="587" y="724" width="1.5" height="1.5" fill="#777"/><rect x="612" y="724" width="1.5" height="1.5" fill="#777"/><rect x="636" y="724" width="1.5" height="1.5" fill="#777"/><rect x="641" y="724" width="1.5" height="1.5" fill="#777"/><rect x="646" y="724" width="1.5" height="1.5" fill="#777"/><rect x="657" y="724" width="1.5" height="1.5" fill="#777"/><rect x="684" y="724" width="1.5" height="1.5" fill="#777"/><rect x="694" y="724" width="1.5" height="1.5" fill="#777"/><rect x="704" y="724" width="1.5" height="1.5" fill="#777"/><rect x="714" y="724" width="1.5" height="1.5" fill="#777"/><rect x="743" y="724" width="1.5" height="1.5" fill="#777"/><rect x="764" y="724" width="1.5" height="1.5" fill="#777"/><rect x="774" y="724" width="1.5" height="1.5" fill="#777"/><rect x="783" y="724" width="8" height="2" fill="#888"/><rect x="797" y="724" width="30" height="2" fill="#888"/><polygon points="571,729.5 571,733 574,729.5" fill="#222"/><rect x="826.5" y="685" width="1" height="7" fill="#7aa6d8"/><path d="M822,697h10v5l-5,5.5l-5,-5.5z" fill="#3b86d6"/><rect x="826.5" y="704" width="1" height="51" fill="#3b86d6"/></svg>
<div class="a" style="left:110px;top:725.5px;width:103.5px;height:21px;border:2px solid #e0161c"></div>
<div class="a" style="left:180px;top:37.5px;width:252px;height:563px;background:#f2f2f2;border:1px solid #cfcfcf;box-shadow:2px 2px 3px rgba(0,0,0,.45)"><div class="mi k" style="top:1.5px;"><span class="l">效果控件(E)</span><span class="r">F3</span></div><div class="mi" style="top:20.5px;"><span class="l">UnMult</span><span class="r">Ctrl+Alt+Shift+E</span></div><div class="mi k" style="top:39.5px;color:#84908e;"><span class="l">全部移除(R)</span><span class="r">Ctrl+Shift+E</span></div><div class="a" style="left:27px;top:61px;width:223px;height:1px;background:#d7c2bd"></div><div class="mi k" style="top:64.5px;"><span class="l">3D 通道</span><i></i></div><div class="mi" style="top:83.5px;"><span class="l">CINEMA 4D</span><i></i></div><div class="mi h" style="top:102.5px;background:#91c9f7;left:2px;width:247px;"><span class="l">Knoll</span><i></i></div><div class="mi" style="top:121.5px;"><span class="l">RG Magic Bullet</span><i></i></div><div class="mi" style="top:140.5px;"><span class="l">Synthetic Aperture</span><i></i></div><div class="mi" style="top:159.5px;"><span class="l">Trapcode</span><i></i></div><div class="mi" style="top:178.5px;"><span class="l">Video Copilot</span><i></i></div><div class="mi k" style="top:198.0px;"><span class="l">表达式控制</span><i></i></div><div class="mi k" style="top:217.0px;"><span class="l">沉浸式视频</span><i></i></div><div class="mi k" style="top:236.0px;"><span class="l">风格化</span><i></i></div><div class="mi k" style="top:255.0px;"><span class="l">过渡</span><i></i></div><div class="mi k" style="top:274.0px;"><span class="l">过时</span><i></i></div><div class="mi k" style="top:293.0px;"><span class="l">抠像</span><i></i></div><div class="mi k" style="top:312.0px;"><span class="l">模糊和锐化</span><i></i></div><div class="mi k" style="top:331.0px;"><span class="l">模拟</span><i></i></div><div class="mi k" style="top:350.0px;"><span class="l">扭曲</span><i></i></div><div class="mi k" style="top:369.0px;"><span class="l">生成</span><i></i></div><div class="mi k" style="top:388.0px;"><span class="l">时间</span><i></i></div><div class="mi k" style="top:407.0px;"><span class="l">实用工具</span><i></i></div><div class="mi k" style="top:426.5px;"><span class="l">通道</span><i></i></div><div class="mi k" style="top:445.5px;"><span class="l">透视</span><i></i></div><div class="mi k" style="top:464.5px;"><span class="l">文本</span><i></i></div><div class="mi k" style="top:483.5px;"><span class="l">颜色校正</span><i></i></div><div class="mi k" style="top:502.5px;"><span class="l">音频</span><i></i></div><div class="mi k" style="top:521.5px;"><span class="l">杂色和颗粒</span><i></i></div><div class="mi k" style="top:540.5px;"><span class="l">遮罩</span><i></i></div></div>
<div class="a" style="left:429px;top:137px;width:113px;height:25px;background:#f2f2f2;border:1px solid #ccc;box-shadow:2px 2px 3px rgba(0,0,0,.4)"></div>
<div class="a" style="left:431px;top:141px;width:108px;height:19px;background:#91c9f7"></div>
<div class="t" style="left:457.5px;top:144.5px;font-size:12px;letter-spacing:-.35px;color:#111">UnMult</div>
<div class="a" style="left:426px;top:133.5px;width:124px;height:35px;border:3px solid #e0161c"></div>
<svg style="left:0;top:0" width="1325" height="755"><polygon points="524.0,177.0 541.2,185.1 535.8,186.1 712.5,414.6 711.5,415.4 530.2,190.6 527.9,195.6" fill="#e8191b"/></svg></body></html>
